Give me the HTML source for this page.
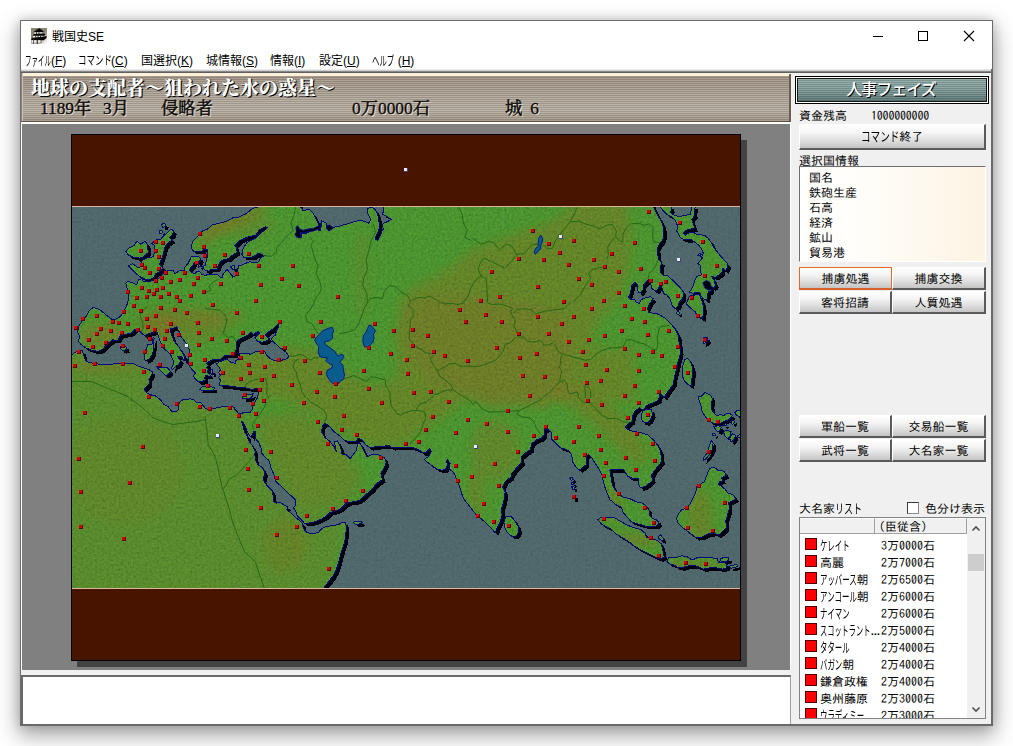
<!DOCTYPE html>
<html lang="ja">
<head>
<meta charset="utf-8">
<title>戦国史SE</title>
<style>
*{box-sizing:border-box;margin:0;padding:0}
html,body{width:1013px;height:746px;overflow:hidden;background:#fff}
body{position:relative;font-family:"Liberation Sans","IPAGothic","Noto Sans CJK JP",sans-serif;font-size:12px;color:#000}
.abs{position:absolute}
#win{position:absolute;left:20px;top:20px;width:973px;height:706px;background:#fff;border:1px solid #6e6e6e;border-right:2px solid #6a6a6a;border-bottom:2px solid #6a6a6a;box-shadow:0 8px 20px 2px rgba(0,0,0,.34),0 0 10px rgba(0,0,0,.16)}
#titlebar{position:absolute;left:21px;top:21px;width:971px;height:48px;background:#fff}
#title{position:absolute;left:52px;top:29px;font-size:12px;line-height:16px;font-family:"Liberation Sans","Noto Sans CJK JP",sans-serif;font-weight:400;white-space:nowrap}
.menu{position:absolute;top:53px;font-size:12px;line-height:16px;white-space:nowrap;font-family:"Liberation Sans","Noto Sans CJK JP",sans-serif}
.menu u{text-decoration:underline;text-underline-offset:1px}
#header{position:absolute;left:21px;top:72px;width:770px;height:50px;overflow:hidden;
 background:linear-gradient(to bottom,#4a4a4a 0,#4a4a4a 1px,#fff0dc 1px,#fff0dc 3.5px,rgba(0,0,0,0) 3.5px),repeating-linear-gradient(to bottom,#b6ac9f 0,#b6ac9f 1px,#978d81 1px,#978d81 2px);
 border-bottom:1px solid #5e5045}
#header i{position:absolute;left:0;top:4px;width:100%;height:46px;background:linear-gradient(to bottom,rgba(60,30,10,.10) 0,rgba(255,255,255,.08) 55%,rgba(255,255,255,.12) 75%,rgba(40,20,0,.10) 100%)}
#header b{position:absolute;left:0;top:0;width:2px;height:50px;background:linear-gradient(to right,#6a6a6a,#e8dcc8)}
#header s{position:absolute;right:0;top:2px;width:2px;height:48px;background:#6b5d50}
#hline{position:absolute;left:21px;top:122px;width:770px;height:2px;background:#fff}
.h1{position:absolute;left:31px;top:77.7px;font-family:"Liberation Serif","Noto Serif CJK SC",serif;font-weight:900;font-size:19px;line-height:22px;color:#fff;text-shadow:1px 1px 0 #000,1px 0 0 rgba(0,0,0,.5);white-space:nowrap;letter-spacing:0}
.h2{position:absolute;top:98.5px;font-family:"Liberation Serif","Noto Serif CJK SC",serif;font-weight:500;font-size:17.33px;line-height:20px;color:#0c0c0c;-webkit-text-stroke:0.35px #0c0c0c;text-shadow:1px 1px 0 #efe6d6;white-space:nowrap}
#grayarea{position:absolute;left:22px;top:124px;width:768px;height:546px;background:#808080}
#mapshadow{position:absolute;left:77px;top:140px;width:670px;height:527px;background:#434343}
#map{position:absolute;left:71px;top:134px;width:670px;height:527px}
#split{position:absolute;left:21px;top:670px;width:770px;height:5px;background:#f0f0f0}
#msg{position:absolute;left:21px;top:675px;width:770px;height:49px;background:#fff;border-top:2px solid #696969;border-left:2px solid #696969;border-right:1px solid #a0a0a0;border-bottom:0}
#side{position:absolute;left:791px;top:72px;width:200px;height:652px;background:#f0f0f0}

#side .t{position:absolute;white-space:nowrap;font-size:12px;line-height:12px;font-family:"IPAGothic","Liberation Sans","Noto Sans CJK JP",sans-serif}
#phase{position:absolute;left:4px;top:4px;width:194px;height:28px;border:1px solid #000;background:#fff;padding:1px}
#phase i{display:block;width:100%;height:100%;border:1px solid #1a1a1a;background:repeating-linear-gradient(to bottom,rgba(255,255,255,.13) 0,rgba(255,255,255,.13) 1px,rgba(0,0,0,.10) 1px,rgba(0,0,0,.10) 2px),linear-gradient(to bottom,#8aa6a2,#7d9a97 45%,#55716f)}
#phase b{position:absolute;left:-1px;top:3px;width:100%;text-align:center;font-family:"Liberation Sans","Noto Sans CJK JP",sans-serif;font-weight:500;font-size:16px;letter-spacing:-1px;line-height:20px;color:#fff;text-shadow:1px 1px 0 #000}
.btn{position:absolute;height:23px;border-top:1px solid #fff;border-left:1px solid #fff;border-right:2px solid #5a5a5a;border-bottom:2px solid #5a5a5a;background:linear-gradient(to bottom,#ffffff 0,#f4f4f4 35%,#dcdcdc 70%,#c4c4c4 100%);text-align:center;font-size:12px;line-height:21px;font-family:"IPAGothic","Liberation Sans","Noto Sans CJK JP",sans-serif;white-space:nowrap}
.btn.foc{border:1px solid #e0692c;border-bottom:2px solid #d8602a;line-height:20px}
#info{position:absolute;left:8px;top:94px;width:187px;height:96px;border-top:1px solid #6e6e6e;border-left:1px solid #6e6e6e;border-right:1px solid #fff;border-bottom:1px solid #fff;background:linear-gradient(to right,#fff 0,#fffdf8 40%,#fdf3e2 100%)}
#list{position:absolute;left:8px;top:445px;width:187px;height:202px;border:1px solid #828282;background:#fff;overflow:hidden}
#list .hd{position:absolute;top:0;height:16px;background:#f0f0f0;border-right:1px solid #a0a0a0;border-bottom:1px solid #a0a0a0;border-top:1px solid #fff}
#list .sq{position:absolute;left:5px;width:12px;height:12px;background:#f00;border:1px solid #500;margin-top:-1px}
#sb{position:absolute;left:167px;top:0;width:18px;height:200px;background:#f0f0f0}
#sb .th{position:absolute;left:1px;top:36px;width:16px;height:17px;background:#cdcdcd}
.hk{font-family:"Noto Sans CJK JP","IPAGothic",sans-serif;font-weight:400}
.sx{display:inline-block;transform-origin:0 50%;font-family:"Noto Sans CJK JP",sans-serif;font-size:13px;font-weight:400;line-height:12px;vertical-align:baseline}
</style>
</head>
<body>
<div id="win"></div>
<div id="titlebar"></div>
<svg class="abs" style="left:31px;top:28px" width="16" height="16" viewBox="0 0 16 16"><defs><linearGradient id="icg" x1="0" y1="0" x2="1" y2="1"><stop offset="0.55" stop-color="#8a8272"/><stop offset="0.9" stop-color="#f4f2ee"/></linearGradient></defs><rect width="16" height="16" fill="url(#icg)"/><rect x="0" y="12" width="10" height="4" fill="#b8b4a8"/><path d="M8.3 0.2L12.8 3.4L12 4.2L3.4 4.2L3 3.6Z" fill="#000"/><rect x="3.4" y="4.3" width="8" height="1.6" fill="#f0f0f0"/><path d="M5 4.3h.8v1.6H5zM7.6 4.3h.8v1.6h-.8z" fill="#111"/><path d="M3 6L12 5.6L14.6 5.9L13 7.8L1.8 7.8Z" fill="#000"/><rect x="2.2" y="7.9" width="10" height="1.6" fill="#f0f0f0"/><path d="M4.4 7.9h.8v1.6h-.8zM6.6 7.9h.9v1.6h-.9zM9 7.9h.8v1.6H9z" fill="#111"/><path d="M1 10L13 8.6L16 8L15 10.6L12.6 12.2L0 11.8Z" fill="#000"/><path d="M1 12.4h1.2v2H1zM3 12.4h2.6v1.8H3zM7 12.4h2.6v1.8H7z" fill="#f4f4f4"/><path d="M2.3 12h.6v4h-.6zM5.8 12h1v4h-1zM9.8 12h.5v3h-.5z" fill="#222"/></svg>
<svg class="abs" style="left:860px;top:21px" width="130" height="30" viewBox="860 21 130 30"><path d="M873 36.5h10" stroke="#000" stroke-width="1" fill="none"/><rect x="918.5" y="31.5" width="9" height="9" fill="none" stroke="#000" stroke-width="1"/><path d="M964 31l10 10M974 31l-10 10" stroke="#000" stroke-width="1.1" fill="none"/></svg>
<div id="title">戦国史SE</div>
<div class="menu" style="left:25px"><span class="sx" style="transform:scaleX(0.498);margin-right:-26.1px">ファイル</span>(<u>F</u>)</div>
<div class="menu" style="left:78px"><span style="display:inline-block;transform:scaleX(.71);transform-origin:0 50%;margin-right:-15px">コマンド</span>(<u>C</u>)</div>
<div class="menu" style="left:141px">国選択(<u>K</u>)</div>
<div class="menu" style="left:206px">城情報(<u>S</u>)</div>
<div class="menu" style="left:270px">情報(<u>I</u>)</div>
<div class="menu" style="left:319px">設定(<u>U</u>)</div>
<div class="menu" style="left:372px"><span class="sx" style="transform:scaleX(0.572);margin-right:-16.7px">ヘルプ</span> (<u>H</u>)</div>
<div class="abs" style="z-index:5;left:21px;top:69px;width:970px;height:4px;background:linear-gradient(to bottom,#f4f4f4 0,#d8d8d8 35%,#8a8a8a 60%,#4c4c4c 100%)"></div>
<div id="header"><i></i><b></b><s></s></div><div id="hline"></div>
<div class="h1">地球の支配者～狙われた水の惑星～</div>
<div class="h2" style="left:40px">1189年</div>
<div class="h2" style="left:103px">3月</div>
<div class="h2" style="left:161px">侵略者</div>
<div class="h2" style="left:352px">0万0000石</div>
<div class="h2" style="left:505px">城<span style="margin-left:8px">6</span></div>
<div id="grayarea"></div>
<div id="mapshadow"></div>
<svg id="map" viewBox="71 134 670 527">
<defs>
<clipPath id="seaclip"><rect x="72" y="207" width="668" height="381"/></clipPath>
<filter id="noise" x="0" y="0" width="100%" height="100%"><feTurbulence type="fractalNoise" baseFrequency="0.42" numOctaves="2" seed="3" result="t"/><feColorMatrix in="t" type="matrix" values="0 0 0 0 0  0 0 0 0 0  0 0 0 0 0  1.2 1.2 0 0 -0.95"/></filter>
<filter id="noise2" x="0" y="0" width="100%" height="100%"><feTurbulence type="fractalNoise" baseFrequency="0.42" numOctaves="2" seed="11" result="t"/><feColorMatrix in="t" type="matrix" values="0 0 0 0 0  0 0 0 0 0  0 0 0 0 0  1.2 1.2 0 0 -0.95"/></filter>
<filter id="blur8"><feGaussianBlur stdDeviation="5"/></filter>
<clipPath id="landclip"><path d="M260 204 L260 206.4 L252.2 208.6 L246.7 213.4 L237.7 217.7 L234.1 217.1 L226.8 221.3 L219.6 223.1 L212.4 224.9 L207.5 229.1 L202.7 230.9 L199.1 234.5 L196.7 237.6 L192.5 241.2 L191.3 247.2 L193.1 251.4 L192.2 249.8 L193.5 251.2 L202.6 251.2 L203.3 249.4 L207.1 249.4 L207.8 253.9 L207.1 257.4 L206.4 260.9 L205.1 263.7 L205.4 265.4 L202.6 266.8 L204.7 270 L208.9 271.4 L210.3 269.3 L217.3 269.3 L218 266.5 L220 262.3 L223.5 259.5 L229.1 258.8 L231.2 256 L234.7 253.9 L237.5 251.9 L236.1 248.4 L236.1 246.3 L234.7 245.6 L238.2 242.1 L240.3 240 L240.1 240.6 L248.5 236.6 L255.8 235.2 L259.4 229.7 L265.4 226.7 L267.6 227.7 L265.4 229.7 L259.4 233.9 L255.8 237.8 L246.7 242.6 L242.5 249.6 L241.9 254.4 L243.7 257.5 L253.4 256.9 L257 254.2 L260 253.2 L263 255.1 L265.4 255.1 L261.2 257.1 L258.8 261.7 L254 263.1 L249.7 261.7 L243.7 264.1 L242.4 264.8 L238.9 265.8 L238.2 268.6 L237.5 271.4 L234.7 276.3 L232.6 277.3 L229.8 272.8 L227 269.3 L225.6 271 L222.8 274.9 L222.8 277.3 L220.7 277.6 L217.3 274.2 L206.8 274.5 L205.8 275.6 L201.9 274.2 L199.5 271.7 L197.7 271 L194.9 273.5 L191.5 272.4 L189.7 270.7 L190.4 267.9 L193.2 265.1 L194.6 262.3 L197 264.4 L198.8 264.1 L199.8 260.9 L200.9 259.2 L199.8 257.4 L197.4 256.4 L191.5 256.4 L190.1 259.2 L188.3 263 L184.5 267.5 L184.1 270.3 L181 270.3 L179.5 270.7 L174.7 273.7 L173.5 270.1 L167.5 270.7 L163.9 272.5 L160.2 277.4 L155.4 279.8 L149.4 281.6 L143.4 281.6 L142.2 278.6 L138.5 279.8 L136.7 284.6 L127.7 281 L125.9 283.4 L126.5 285 L127.7 291 L128.9 297.1 L127.1 304.3 L124.1 310.9 L120.4 316.4 L115.6 319.4 L112 319.4 L107.2 315.8 L99.9 309.7 L93.3 307.3 L89.1 310.9 L86.7 315.8 L82.5 320.6 L78.8 326 L77.6 332 L80 336.9 L78.2 341.1 L81.3 344.7 L86.7 348.3 L93.3 350.7 L98.7 351.3 L103 348.9 L107.2 344.1 L112.6 339.9 L118 340.5 L120.4 335.7 L125.3 334.4 L131.3 333.2 L134.9 329.6 L137.9 329 L140.9 332.6 L144.6 335.7 L148.2 333.8 L153 332.6 L153.7 331.4 L156.9 332.3 L158.2 335.5 L159.6 340.5 L161.9 344.6 L164.2 348.7 L167.4 351.5 L170.1 353.7 L171.9 357.4 L173.7 361.9 L172.8 365.6 L171.5 367.4 L172.4 369.7 L174.7 367 L179.2 364.2 L180.6 360.6 L178.8 358.8 L177.8 356.5 L181.5 356.5 L183.3 360.1 L184.7 361 L184.7 356.5 L181.9 351.9 L179.2 347.4 L176.5 344.6 L173.7 340.1 L171.9 335.5 L170.5 330.9 L170.5 328.7 L173.7 328.2 L176.9 326.8 L177.4 329.1 L179.2 331.9 L181 336.4 L184.7 341.4 L187.4 344.6 L189.2 349.2 L189.7 353.7 L188.3 358.3 L188.3 362.9 L189.7 366.5 L193.4 371.1 L195.3 372.9 L193.4 376.2 L195.3 378.9 L197.7 381.4 L200.1 382 L202.5 381.4 L205.5 380.2 L204.6 378 L205.8 375.6 L208.5 376.2 L210.6 376.2 L209.1 373.8 L207.6 372.9 L207.3 370.5 L208.8 369.9 L206.7 367.5 L208.2 366 L207.9 363.9 L206.4 363.6 L210 360.9 L213.3 359.3 L217.6 359.6 L221.2 359 L223.6 356.6 L225.4 355.4 L230.8 355.4 L235.1 355.1 L235.6 353.1 L236.2 348.2 L236.8 341 L241 338.6 L248.2 335 L250.7 332.6 L253.7 334.4 L257.9 331.4 L259.7 333.2 L256.7 335.6 L254.9 337.4 L257.9 341.6 L262.7 342.2 L267.5 340.4 L269.3 338.6 L265.7 335 L267.5 332.6 L272.4 329.5 L276 325.9 L279 324.1 L278.4 327.7 L276.6 330.2 L275.4 335 L271.2 338.6 L273 341.6 L277.2 345.2 L280.2 348.2 L284.4 349.4 L286.8 353.1 L289 356.4 L285.6 359.7 L279.6 360.3 L273.6 360.3 L269.9 358.5 L266.9 355.5 L265.1 351.9 L261.5 351.3 L255.5 351.9 L250.7 354.3 L245.8 353.1 L239.8 353.1 L239.2 357.9 L238.1 359.6 L235.7 360.3 L235.1 363.3 L232 362.7 L229.6 361.5 L227.8 359.9 L226.6 359 L224.2 359.6 L221.2 361.2 L218.8 362.1 L216.4 364.2 L218.8 366.9 L220.6 369.9 L218.5 372.6 L220.6 375.3 L218.5 377.7 L220.6 380.2 L219.4 383.2 L220 385.6 L222.4 385.6 L228.4 385.6 L230.8 386.8 L234.4 386.5 L237.5 387.7 L245 387.7 L251.5 389.3 L257.5 388.7 L258.7 392.3 L257.5 397.7 L255.1 402 L252.7 406.2 L252.1 409.8 L249.7 412.8 L243.1 412.8 L240.1 414 L238.2 413.4 L235.8 411 L234 407.4 L229.8 406.2 L225 406.2 L218.9 407.4 L212.9 408.6 L208.1 409.2 L205.7 408.6 L202.7 405 L201.5 403.2 L196 402 L193.6 399.5 L190 398.9 L187.5 399.2 L182.7 399.8 L180.3 401.6 L177.9 405.2 L179.1 408.8 L176.7 411.3 L171.3 411.3 L168.2 406.4 L164 404.6 L160.4 399.8 L156.2 396.2 L151.4 395 L147.1 393.2 L144.1 389.5 L146.5 386.5 L149.5 383.5 L148.9 379.3 L151.4 375.7 L152.6 372.1 L150.2 370.3 L145.3 368.4 L139.3 366.6 L133.3 363.6 L127.2 363 L120 363.6 L113.2 364 L101.2 364.6 L93.9 363.4 L86.7 361.6 L84.3 357.4 L82.5 350.7 L78.2 350.7 L72.2 354.3 L68 355 L68 592 L323.5 592 L323.8 588.3 L325 586.2 L327.4 583.2 L332.2 577.2 L335.8 571.2 L338.2 563.9 L340.1 556.7 L342.5 548.2 L344.9 541 L346.1 531.4 L346.1 525.3 L344.9 522.3 L342.5 522.3 L338.2 524.7 L331 525.9 L325 527.1 L321.4 528.9 L318.9 532 L315.9 533.2 L311.7 533.5 L306.9 532.6 L304.5 530.2 L302.7 525.9 L302.7 524.1 L299.9 520.8 L295.1 517.2 L290.3 512.4 L286.7 509.9 L287.9 506.9 L284.3 505.1 L279.4 502.1 L276.4 503.3 L274 502.1 L273.4 496.7 L272.2 490.7 L266.2 484.6 L263.2 479.8 L265 472.6 L262.6 467.7 L257.7 464.7 L255.9 460.5 L254.7 454.5 L255.3 450.9 L251.7 444.8 L248.1 440 L247.9 436.9 L244.9 432.7 L243.1 426.7 L241.3 421.3 L242.5 421.3 L244.3 424.3 L246.7 430.3 L249.1 435.1 L251.5 437.5 L252.1 435.1 L253.9 430.9 L255.7 431.5 L255.1 435.1 L255.7 438.7 L258.7 442.4 L261.2 448.4 L261.8 453.2 L265.4 457.4 L268.4 460 L269.2 461.7 L271 467.7 L274.6 476.2 L275.2 481 L280.7 485.8 L286.7 491.9 L291.5 496.1 L295.1 499.7 L295.7 505.7 L293.3 507.5 L295.7 511.2 L297.5 516 L302.4 520.8 L304.2 523.2 L308.4 523.2 L314.4 522 L321.7 519 L326.5 516 L330.1 512.4 L334.9 511.2 L341 508.7 L345.8 503.9 L350 502.1 L355.1 501.8 L359.9 500 L371.2 490 L377.2 483.2 L382.6 479.6 L380.8 473.6 L384.4 467.5 L386.2 462.7 L384.4 457.6 L379 454.9 L372.4 454.5 L366.9 456.7 L365.7 454.3 L362.7 448.2 L359.7 442.8 L357.6 444.6 L356.1 450.7 L353.1 454.9 L350.1 458.5 L346.4 454.9 L341 453.7 L341.6 450.7 L340.4 446.4 L337.4 440.8 L334.4 441.6 L336.2 451.3 L333.2 445.8 L330.2 441.6 L324.7 437.4 L321.7 432 L322.3 425.9 L325.3 423.5 L328.9 425.9 L333.8 431.4 L338.6 435 L344.6 440.4 L347 441 L356.1 441.6 L357.9 438.6 L361.5 439.2 L365.7 444.6 L369.9 447.6 L378.4 446.4 L389.2 445.8 L391.7 447.6 L402.5 447 L413.4 447.6 L420 450.7 L422.3 452.8 L425.9 452.8 L428.3 450.4 L429.5 448.6 L431.4 451.6 L428.9 456.4 L424.1 459.4 L427.7 462.5 L432.6 466.1 L437.4 469.1 L442.2 470.3 L445.8 469.1 L447.6 464.9 L446.4 460.7 L447.6 459.4 L450.1 463.7 L448.8 468.5 L453.1 472.1 L455.5 475.7 L456.7 481.2 L459.1 484.8 L460.9 490.8 L462.7 496.8 L464.5 500 L467.7 503.8 L473.2 511 L477.4 516.4 L482.2 519.4 L488.2 524.9 L493.1 530.3 L495.2 532.7 L497.3 527.9 L500.3 521.9 L502.1 514.6 L501.5 508.6 L503.3 503.8 L504.5 497.7 L505.1 491.7 L502.7 486.9 L505.1 481.5 L511.2 477.2 L511.8 473.6 L514.8 470 L522.1 461.9 L520.9 457 L525.7 452.8 L530.5 449.8 L531.7 443.8 L535.9 440.2 L541.4 438.3 L544.4 435.3 L544.4 429.9 L547.4 429.3 L551 431.7 L551.6 438.9 L555.8 443.2 L560.7 448 L565.5 449.2 L570.3 452.2 L572.1 457.6 L572.7 461.9 L575.7 466.7 L579.3 470.3 L583.6 466.7 L586 464.9 L586 457 L588.4 454.6 L592 458.2 L596.2 464.9 L599.8 470.3 L602.3 475.7 L603.5 482.4 L605.3 488.4 L607.7 494.4 L610.1 500 L611.7 500.5 L615.9 504.7 L621.4 507.1 L623.2 512.6 L627.4 517.4 L631 521.6 L638.2 524 L646.7 526.4 L655.1 526.4 L659.3 524 L657.5 520.4 L652.7 518.6 L649.1 515 L649.1 510.2 L645.5 505.3 L641.9 502.9 L635.8 501.7 L629.8 498.7 L622.6 496.9 L617.7 492.7 L614.1 488.4 L612.3 484.8 L611.7 480 L611.1 477.2 L609.9 469.9 L623.8 469.7 L627.4 476 L632.2 478.4 L638.2 478.4 L638.8 484.4 L640.7 488 L645.5 486.2 L650.3 482.6 L652.7 480.2 L651.5 475.4 L653.9 471.2 L658.1 466.3 L661.8 461.5 L661.2 456.7 L660.6 450.7 L658.1 445.8 L653.9 440.4 L647.9 435 L643.1 433.2 L637 432 L631 430.8 L627.4 428.9 L625.6 427.1 L628.6 423.5 L632.2 421.1 L632.8 415.7 L635.2 410.9 L639.4 407.8 L643.1 410.3 L644.9 408.4 L646.7 405.4 L652.7 403 L658.7 400 L659.7 394.7 L661.3 394.7 L664 397.4 L667.2 392.6 L670.4 388.3 L673.6 384 L674.2 378.6 L675.8 372.2 L676.9 367.9 L677.9 362.5 L679.5 357.2 L680.6 351.8 L680.1 346.4 L678.5 340 L679.1 337.9 L677.3 333.1 L674.9 328.3 L672.5 325.8 L669.5 322.2 L664.7 318 L659.8 315 L655 313.2 L657.3 313.7 L652.3 313.2 L648.7 312.2 L647.2 308.2 L650.3 302.7 L653.3 298.7 L650.3 296.7 L644.2 298.2 L641.2 299.7 L639.2 303.7 L636.2 302.2 L634.7 299.2 L630.7 299.2 L628.6 297.2 L630.2 294.1 L631.2 289.1 L632.2 284.6 L635.2 282.6 L637.7 284.6 L637.2 288.1 L638.2 292.1 L640.2 293.1 L643.7 289.1 L643.2 285.1 L645.7 282.6 L648.2 279.6 L650.8 283.1 L651.3 288.1 L653.8 290.1 L656.8 291.1 L659.3 286.6 L661.8 286.6 L662.3 290.1 L664.3 294.1 L667.3 295.2 L670.4 299.2 L671.9 305.2 L674.9 308.7 L677.9 306.2 L679.4 302.2 L682.9 298.2 L683.4 292.1 L680.4 288.1 L676.4 284.1 L672.4 280.1 L668.3 276.1 L663.3 275.1 L660.8 273 L660.8 265 L662.2 262.9 L659.2 260.5 L658 255.7 L657.4 248.4 L659.8 243.6 L662.8 240 L664 235.2 L663.4 226.7 L661 220.7 L657.4 214.7 L655 209.8 L652.3 204 L383.9 204 L383.9 206.4 L382.7 214.6 L387.5 216.5 L391.1 219.5 L388.1 221.3 L383.9 223.1 L382.1 224.9 L383.3 229.1 L381.5 232.1 L380.3 235.8 L377.9 240.6 L375.5 239.4 L376.1 235.8 L377.9 232.1 L379.7 227.9 L379.1 223.1 L378.5 218.3 L377.3 212.8 L374.8 209.2 L371.2 207.2 L367.6 208.6 L367 212.2 L368.8 215.9 L370.6 219.5 L368.8 223.1 L364.6 221.3 L359.8 220.1 L353.7 221.9 L347.7 223.7 L339.3 226.1 L333.2 227.3 L331.4 229.7 L328.4 230.3 L326.6 227.9 L326.6 225.5 L326 223.1 L321.8 220.7 L321.4 226.1 L320 230.6 L316.4 229.1 L310.9 230.8 L305.5 233.5 L301.3 233.2 L301.3 237 L297.7 237 L295.3 234.5 L296.8 232.1 L296.1 227.9 L297.7 226.5 L299.2 229.7 L303.1 231.5 L307.9 230.3 L313.9 229.5 L319.1 227.1 L318.2 223.1 L315.8 218.3 L313.3 213.4 L309.7 209.6 L303.1 210.4 L299.5 206.4 L299.5 204 Z M125.9 251.4 L129.5 247.8 L134.3 245.4 L136.7 241.2 L140.9 244.2 L145.2 241.2 L147.6 244.8 L148.2 252.6 L143.4 256.9 L139.7 258.1 L132.5 256.9 L128.3 255.1 Z M128.6 265.9 L132.5 263.5 L138.5 268 L143.4 265.3 L140.9 261.7 L143.4 259.9 L148.2 257.5 L153 256.9 L154.5 252.6 L154.8 245.4 L151.8 243.6 L155.4 240.2 L160.8 239 L162.7 236.6 L167.5 232.5 L171.1 229.1 L173.8 230.9 L172.5 234.9 L169.3 237.3 L172.5 240 L167.5 243.4 L164.8 247.2 L163.6 253.2 L161.5 259.3 L159.6 264.1 L163.3 268.3 L159.6 271.9 L155.4 273.7 L154.2 277.4 L149.4 280 L143.4 278.6 L136.7 274.3 L132.5 270.1 Z M161.5 224.9 L163.3 223.1 L165.7 224.3 L165.1 226.7 L162.7 227.7 Z M159.6 230.9 L161.5 230.1 L162.7 232.1 L161.2 233.9 L159.6 233 Z M230.2 266.5 L234.7 265.4 L235 267.9 L233.3 270 Z M198.1 265.1 L199.8 264.8 L200.5 266.5 L198.8 267.2 Z M120.4 347.1 L122.9 345.3 L125.9 346.5 L126.5 349.5 L123.5 350.7 L121.1 349.5 Z M147.3 344.6 L151.9 344.6 L152.8 338.2 L154.1 337.8 L153.7 346.4 L152.8 353.7 L149.1 359.2 L145.5 360.6 L144.1 358.3 L144.6 351.9 L146.8 348.3 Z M156.9 366.5 L159.6 367.4 L167.4 367.9 L169.2 369.7 L170.5 372 L166.9 375.6 L164.6 374.7 L161 371.1 L157.8 368.3 Z M199.5 389.5 L202.2 386.5 L205.8 386.2 L214.5 387.4 L213.6 390.1 L201.9 390.4 Z M210 369.9 L212.1 369.6 L213 372.9 L212.1 374.4 L210.6 372.9 Z M242.5 397.1 L244.3 395.3 L250.3 394.7 L253.3 393.5 L252.1 396.5 L249.1 398.7 L243.1 398.7 Z M353.3 522.3 L355.7 521.1 L361.2 521.5 L362.4 522.9 L358.7 524.1 L355.1 524.1 Z M505.7 516.4 L511.2 516.4 L514.8 520.7 L518.4 526.7 L519 531.5 L516 536.3 L511.8 536.3 L507.5 532.7 L504.5 526.7 L503.9 521.9 Z M569.7 478.1 L572.1 477.3 L573.3 479.3 L571.5 480.6 Z M571.3 482.4 L573.3 481.8 L573.9 484.2 L572.1 484.8 Z M571.7 486.6 L573.9 486.2 L574.5 489 L572.7 489.6 Z M572.1 495 L575.1 495 L575.1 498.6 L572.1 498.6 Z M643.1 410.9 L646.7 409 L651.5 409.6 L652.7 414.5 L650.3 419.9 L646.7 422.9 L642.5 421.7 L641.3 418.1 L641.9 413.3 Z M687.6 358.2 L690.3 361.5 L692.4 366.8 L692.9 372.2 L691.9 378.6 L691.3 386.1 L687.6 384 L684.4 380.8 L682.2 375.4 L682.2 369 L683.3 363.1 L684.9 359.8 Z M659.8 206.2 L670.7 206.2 L671.9 209.8 L670.1 212.2 L672.5 214.7 L679.1 216.5 L686.4 215.3 L690.6 214 L691.8 206.2 L695.4 206.2 L694.2 211.6 L694.8 215.3 L691.8 219.5 L693.6 224.9 L694.8 228.5 L690 229.1 L685.2 230.9 L683.4 233.4 L685.2 235.2 L690 232.1 L693.6 232.1 L696.6 234.6 L704.5 235.2 L708.1 238.2 L711.7 243 L714.1 247.8 L717.7 252.7 L721.4 256.9 L725 261.1 L728 264.1 L727.4 267.7 L725.6 270.8 L722.6 268.3 L722 272.6 L718.9 275 L715.3 277.4 L711.7 276.2 L714.1 280.4 L715.3 284.6 L715.9 282.4 L715.3 286.6 L712.9 287.8 L710.5 287.2 L711.1 290.9 L708.1 292.1 L707.5 295.7 L706.9 299.9 L704.5 299.3 L700.8 295.7 L699.6 292.1 L697.2 292.1 L692.4 293.3 L689.4 292.1 L691.2 289.7 L693.6 284.8 L694.8 280 L694.2 281 L697.2 276.2 L701.4 275 L700.2 270.1 L700.2 265.3 L697.8 263.5 L700.8 260.5 L702.7 258.1 L700.2 255.7 L697.8 255.7 L699.6 253.3 L702.7 255.7 L703.3 253.3 L701.4 248.4 L698.4 244.8 L693.6 241.2 L691.2 239.4 L686.4 240 L680.9 238.2 L678.5 234 L676.7 230.9 L677.9 226.7 L675.5 220.7 L672.5 217.1 L667.1 214.7 L663.4 211 Z M689.4 296.3 L687.6 300.5 L686.4 304.1 L689.4 307.1 L692.4 309.6 L695.4 312 L696.6 315 L700.2 317.4 L702.7 318.6 L703.3 313.8 L703.9 309 L702.7 302.9 L700.8 298.1 L699.6 294.5 L693.6 295.1 Z M676.1 312.6 L678.5 311.4 L679.7 313.2 L677.9 315 Z M703.3 337.9 L706.9 337.3 L708.1 340.3 L705.7 342.7 L703.3 343.9 Z M698.6 396.6 L701.6 396 L705.2 392.4 L710.7 395.4 L712.5 399 L711.3 404.5 L711.9 409.9 L714.9 414.1 L716.7 415.9 L720.3 414.7 L723.9 415.3 L727 413.5 L731.2 414.1 L732.4 415.9 L728.8 419.6 L723.9 421.4 L720.3 423.2 L716.1 423.8 L711.9 422.6 L708.3 420.2 L705.2 416.5 L702.2 411.7 L701 405.7 L699.2 401.5 Z M734.8 412.9 L737.2 410.5 L743.2 409.9 L743.2 417.1 L737.2 415.9 Z M713.7 426.8 L719.1 425.6 L721.5 427.4 L719.1 432.2 L716.7 431 Z M723.3 431.6 L727.6 430.4 L731.2 431.6 L730 435.8 L727.6 438.3 L725.1 436.4 Z M729.4 438.3 L732.4 434 L735.4 435.2 L734.2 439.5 L731.2 441.9 Z M730.6 421.4 L733.6 420.2 L734.8 422 L732.4 424.4 Z M723.3 424.4 L725.8 423.8 L726.4 425.2 L723.9 426 Z M712.5 434 L714.9 433.4 L715.7 435.2 L713.1 435.8 Z M737.2 435.2 L743.2 434.6 L743.2 437.7 L737.8 437.3 Z M711.3 440.7 L713.1 443.1 L712.5 449.1 L710.7 452.7 L708.3 455.8 L705.8 458.8 L703.4 460.6 L704 457 L706.4 453.9 L708.3 450.3 L709.5 445.5 Z M706.4 476 L704.6 481.5 L701 483.9 L696.8 486.9 L695.6 492.9 L692.6 499 L690.2 503.8 L685.3 508.6 L681.7 509.8 L678.7 513.4 L676.3 518.3 L678.1 523.1 L682.9 527.9 L687.7 531.5 L692.6 535.1 L696.2 537.6 L702.2 537 L708.3 533.9 L714.3 533.3 L718.5 535.1 L722.7 531.5 L726.4 527.9 L725.8 520.7 L727.6 514.6 L729.4 508.6 L728.8 502.6 L732.4 500.8 L736 499 L733 494.7 L727.6 492.9 L725.1 489.3 L721.5 486.3 L718.5 484.5 L719.7 481.5 L723.3 480.9 L721.5 477.8 L726.4 475.4 L724.5 471.8 L722.7 470.8 L717.9 470.2 L714.3 467.2 L709.5 468.4 L707.7 473.2 Z M597.8 519.8 L600.9 517.4 L614.1 517.4 L618.9 520.4 L626.2 524.6 L633.4 527.6 L640.7 529.4 L644.9 533.1 L646.7 537.3 L652.7 539.1 L657.5 540.3 L661.2 543.9 L663 551.2 L664.2 557.2 L659.9 559 L655.1 557.2 L647.9 553.6 L640.7 549.9 L633.4 545.7 L628.6 541.5 L622.6 537.9 L616.5 534.3 L611.7 529.4 L605.7 526.4 L601.5 524 Z M658.1 536.7 L660.6 534.9 L663.6 539.1 L662.4 540.9 L659.3 539.1 Z M666.7 561.4 L668.5 557.8 L677.4 557.2 L682.1 555.8 L686.9 556.7 L690.4 559 L694.6 559 L698.1 557.2 L705.8 557.5 L710.6 557.8 L717.1 558.4 L718.3 562 L723.6 562 L726.5 563.8 L726.5 567.9 L722.4 569.1 L715.3 567.7 L709.4 567.9 L703.4 569.1 L699.9 567.3 L694 565.5 L686.9 566.1 L682.1 567.7 L677.4 567.3 L673.8 564.9 L669.1 563.8 Z M720 559 L723 557.8 L728.3 557.5 L728.9 560.2 L724.8 561.7 L721.2 561 Z M729.5 566.1 L733.1 565.3 L736.6 564.4 L737.8 566.1 L734.2 567.9 L730.7 568.1 Z"/></clipPath>
</defs>
<rect x="71" y="134" width="670" height="527" fill="#481400"/>
<rect x="72" y="206" width="668" height="383" fill="#d8b898"/>
<rect x="72" y="207" width="668" height="381" fill="#536d71"/>
<g clip-path="url(#seaclip)">
<rect x="72" y="207" width="668" height="382" fill="#1c3030" filter="url(#noise)" opacity="0.10"/>
<rect x="72" y="207" width="668" height="382" fill="#a0c0c0" filter="url(#noise2)" opacity="0.06"/>
<path d="M260 204 L260 206.4 L252.2 208.6 L246.7 213.4 L237.7 217.7 L234.1 217.1 L226.8 221.3 L219.6 223.1 L212.4 224.9 L207.5 229.1 L202.7 230.9 L199.1 234.5 L196.7 237.6 L192.5 241.2 L191.3 247.2 L193.1 251.4 L192.2 249.8 L193.5 251.2 L202.6 251.2 L203.3 249.4 L207.1 249.4 L207.8 253.9 L207.1 257.4 L206.4 260.9 L205.1 263.7 L205.4 265.4 L202.6 266.8 L204.7 270 L208.9 271.4 L210.3 269.3 L217.3 269.3 L218 266.5 L220 262.3 L223.5 259.5 L229.1 258.8 L231.2 256 L234.7 253.9 L237.5 251.9 L236.1 248.4 L236.1 246.3 L234.7 245.6 L238.2 242.1 L240.3 240 L240.1 240.6 L248.5 236.6 L255.8 235.2 L259.4 229.7 L265.4 226.7 L267.6 227.7 L265.4 229.7 L259.4 233.9 L255.8 237.8 L246.7 242.6 L242.5 249.6 L241.9 254.4 L243.7 257.5 L253.4 256.9 L257 254.2 L260 253.2 L263 255.1 L265.4 255.1 L261.2 257.1 L258.8 261.7 L254 263.1 L249.7 261.7 L243.7 264.1 L242.4 264.8 L238.9 265.8 L238.2 268.6 L237.5 271.4 L234.7 276.3 L232.6 277.3 L229.8 272.8 L227 269.3 L225.6 271 L222.8 274.9 L222.8 277.3 L220.7 277.6 L217.3 274.2 L206.8 274.5 L205.8 275.6 L201.9 274.2 L199.5 271.7 L197.7 271 L194.9 273.5 L191.5 272.4 L189.7 270.7 L190.4 267.9 L193.2 265.1 L194.6 262.3 L197 264.4 L198.8 264.1 L199.8 260.9 L200.9 259.2 L199.8 257.4 L197.4 256.4 L191.5 256.4 L190.1 259.2 L188.3 263 L184.5 267.5 L184.1 270.3 L181 270.3 L179.5 270.7 L174.7 273.7 L173.5 270.1 L167.5 270.7 L163.9 272.5 L160.2 277.4 L155.4 279.8 L149.4 281.6 L143.4 281.6 L142.2 278.6 L138.5 279.8 L136.7 284.6 L127.7 281 L125.9 283.4 L126.5 285 L127.7 291 L128.9 297.1 L127.1 304.3 L124.1 310.9 L120.4 316.4 L115.6 319.4 L112 319.4 L107.2 315.8 L99.9 309.7 L93.3 307.3 L89.1 310.9 L86.7 315.8 L82.5 320.6 L78.8 326 L77.6 332 L80 336.9 L78.2 341.1 L81.3 344.7 L86.7 348.3 L93.3 350.7 L98.7 351.3 L103 348.9 L107.2 344.1 L112.6 339.9 L118 340.5 L120.4 335.7 L125.3 334.4 L131.3 333.2 L134.9 329.6 L137.9 329 L140.9 332.6 L144.6 335.7 L148.2 333.8 L153 332.6 L153.7 331.4 L156.9 332.3 L158.2 335.5 L159.6 340.5 L161.9 344.6 L164.2 348.7 L167.4 351.5 L170.1 353.7 L171.9 357.4 L173.7 361.9 L172.8 365.6 L171.5 367.4 L172.4 369.7 L174.7 367 L179.2 364.2 L180.6 360.6 L178.8 358.8 L177.8 356.5 L181.5 356.5 L183.3 360.1 L184.7 361 L184.7 356.5 L181.9 351.9 L179.2 347.4 L176.5 344.6 L173.7 340.1 L171.9 335.5 L170.5 330.9 L170.5 328.7 L173.7 328.2 L176.9 326.8 L177.4 329.1 L179.2 331.9 L181 336.4 L184.7 341.4 L187.4 344.6 L189.2 349.2 L189.7 353.7 L188.3 358.3 L188.3 362.9 L189.7 366.5 L193.4 371.1 L195.3 372.9 L193.4 376.2 L195.3 378.9 L197.7 381.4 L200.1 382 L202.5 381.4 L205.5 380.2 L204.6 378 L205.8 375.6 L208.5 376.2 L210.6 376.2 L209.1 373.8 L207.6 372.9 L207.3 370.5 L208.8 369.9 L206.7 367.5 L208.2 366 L207.9 363.9 L206.4 363.6 L210 360.9 L213.3 359.3 L217.6 359.6 L221.2 359 L223.6 356.6 L225.4 355.4 L230.8 355.4 L235.1 355.1 L235.6 353.1 L236.2 348.2 L236.8 341 L241 338.6 L248.2 335 L250.7 332.6 L253.7 334.4 L257.9 331.4 L259.7 333.2 L256.7 335.6 L254.9 337.4 L257.9 341.6 L262.7 342.2 L267.5 340.4 L269.3 338.6 L265.7 335 L267.5 332.6 L272.4 329.5 L276 325.9 L279 324.1 L278.4 327.7 L276.6 330.2 L275.4 335 L271.2 338.6 L273 341.6 L277.2 345.2 L280.2 348.2 L284.4 349.4 L286.8 353.1 L289 356.4 L285.6 359.7 L279.6 360.3 L273.6 360.3 L269.9 358.5 L266.9 355.5 L265.1 351.9 L261.5 351.3 L255.5 351.9 L250.7 354.3 L245.8 353.1 L239.8 353.1 L239.2 357.9 L238.1 359.6 L235.7 360.3 L235.1 363.3 L232 362.7 L229.6 361.5 L227.8 359.9 L226.6 359 L224.2 359.6 L221.2 361.2 L218.8 362.1 L216.4 364.2 L218.8 366.9 L220.6 369.9 L218.5 372.6 L220.6 375.3 L218.5 377.7 L220.6 380.2 L219.4 383.2 L220 385.6 L222.4 385.6 L228.4 385.6 L230.8 386.8 L234.4 386.5 L237.5 387.7 L245 387.7 L251.5 389.3 L257.5 388.7 L258.7 392.3 L257.5 397.7 L255.1 402 L252.7 406.2 L252.1 409.8 L249.7 412.8 L243.1 412.8 L240.1 414 L238.2 413.4 L235.8 411 L234 407.4 L229.8 406.2 L225 406.2 L218.9 407.4 L212.9 408.6 L208.1 409.2 L205.7 408.6 L202.7 405 L201.5 403.2 L196 402 L193.6 399.5 L190 398.9 L187.5 399.2 L182.7 399.8 L180.3 401.6 L177.9 405.2 L179.1 408.8 L176.7 411.3 L171.3 411.3 L168.2 406.4 L164 404.6 L160.4 399.8 L156.2 396.2 L151.4 395 L147.1 393.2 L144.1 389.5 L146.5 386.5 L149.5 383.5 L148.9 379.3 L151.4 375.7 L152.6 372.1 L150.2 370.3 L145.3 368.4 L139.3 366.6 L133.3 363.6 L127.2 363 L120 363.6 L113.2 364 L101.2 364.6 L93.9 363.4 L86.7 361.6 L84.3 357.4 L82.5 350.7 L78.2 350.7 L72.2 354.3 L68 355 L68 592 L323.5 592 L323.8 588.3 L325 586.2 L327.4 583.2 L332.2 577.2 L335.8 571.2 L338.2 563.9 L340.1 556.7 L342.5 548.2 L344.9 541 L346.1 531.4 L346.1 525.3 L344.9 522.3 L342.5 522.3 L338.2 524.7 L331 525.9 L325 527.1 L321.4 528.9 L318.9 532 L315.9 533.2 L311.7 533.5 L306.9 532.6 L304.5 530.2 L302.7 525.9 L302.7 524.1 L299.9 520.8 L295.1 517.2 L290.3 512.4 L286.7 509.9 L287.9 506.9 L284.3 505.1 L279.4 502.1 L276.4 503.3 L274 502.1 L273.4 496.7 L272.2 490.7 L266.2 484.6 L263.2 479.8 L265 472.6 L262.6 467.7 L257.7 464.7 L255.9 460.5 L254.7 454.5 L255.3 450.9 L251.7 444.8 L248.1 440 L247.9 436.9 L244.9 432.7 L243.1 426.7 L241.3 421.3 L242.5 421.3 L244.3 424.3 L246.7 430.3 L249.1 435.1 L251.5 437.5 L252.1 435.1 L253.9 430.9 L255.7 431.5 L255.1 435.1 L255.7 438.7 L258.7 442.4 L261.2 448.4 L261.8 453.2 L265.4 457.4 L268.4 460 L269.2 461.7 L271 467.7 L274.6 476.2 L275.2 481 L280.7 485.8 L286.7 491.9 L291.5 496.1 L295.1 499.7 L295.7 505.7 L293.3 507.5 L295.7 511.2 L297.5 516 L302.4 520.8 L304.2 523.2 L308.4 523.2 L314.4 522 L321.7 519 L326.5 516 L330.1 512.4 L334.9 511.2 L341 508.7 L345.8 503.9 L350 502.1 L355.1 501.8 L359.9 500 L371.2 490 L377.2 483.2 L382.6 479.6 L380.8 473.6 L384.4 467.5 L386.2 462.7 L384.4 457.6 L379 454.9 L372.4 454.5 L366.9 456.7 L365.7 454.3 L362.7 448.2 L359.7 442.8 L357.6 444.6 L356.1 450.7 L353.1 454.9 L350.1 458.5 L346.4 454.9 L341 453.7 L341.6 450.7 L340.4 446.4 L337.4 440.8 L334.4 441.6 L336.2 451.3 L333.2 445.8 L330.2 441.6 L324.7 437.4 L321.7 432 L322.3 425.9 L325.3 423.5 L328.9 425.9 L333.8 431.4 L338.6 435 L344.6 440.4 L347 441 L356.1 441.6 L357.9 438.6 L361.5 439.2 L365.7 444.6 L369.9 447.6 L378.4 446.4 L389.2 445.8 L391.7 447.6 L402.5 447 L413.4 447.6 L420 450.7 L422.3 452.8 L425.9 452.8 L428.3 450.4 L429.5 448.6 L431.4 451.6 L428.9 456.4 L424.1 459.4 L427.7 462.5 L432.6 466.1 L437.4 469.1 L442.2 470.3 L445.8 469.1 L447.6 464.9 L446.4 460.7 L447.6 459.4 L450.1 463.7 L448.8 468.5 L453.1 472.1 L455.5 475.7 L456.7 481.2 L459.1 484.8 L460.9 490.8 L462.7 496.8 L464.5 500 L467.7 503.8 L473.2 511 L477.4 516.4 L482.2 519.4 L488.2 524.9 L493.1 530.3 L495.2 532.7 L497.3 527.9 L500.3 521.9 L502.1 514.6 L501.5 508.6 L503.3 503.8 L504.5 497.7 L505.1 491.7 L502.7 486.9 L505.1 481.5 L511.2 477.2 L511.8 473.6 L514.8 470 L522.1 461.9 L520.9 457 L525.7 452.8 L530.5 449.8 L531.7 443.8 L535.9 440.2 L541.4 438.3 L544.4 435.3 L544.4 429.9 L547.4 429.3 L551 431.7 L551.6 438.9 L555.8 443.2 L560.7 448 L565.5 449.2 L570.3 452.2 L572.1 457.6 L572.7 461.9 L575.7 466.7 L579.3 470.3 L583.6 466.7 L586 464.9 L586 457 L588.4 454.6 L592 458.2 L596.2 464.9 L599.8 470.3 L602.3 475.7 L603.5 482.4 L605.3 488.4 L607.7 494.4 L610.1 500 L611.7 500.5 L615.9 504.7 L621.4 507.1 L623.2 512.6 L627.4 517.4 L631 521.6 L638.2 524 L646.7 526.4 L655.1 526.4 L659.3 524 L657.5 520.4 L652.7 518.6 L649.1 515 L649.1 510.2 L645.5 505.3 L641.9 502.9 L635.8 501.7 L629.8 498.7 L622.6 496.9 L617.7 492.7 L614.1 488.4 L612.3 484.8 L611.7 480 L611.1 477.2 L609.9 469.9 L623.8 469.7 L627.4 476 L632.2 478.4 L638.2 478.4 L638.8 484.4 L640.7 488 L645.5 486.2 L650.3 482.6 L652.7 480.2 L651.5 475.4 L653.9 471.2 L658.1 466.3 L661.8 461.5 L661.2 456.7 L660.6 450.7 L658.1 445.8 L653.9 440.4 L647.9 435 L643.1 433.2 L637 432 L631 430.8 L627.4 428.9 L625.6 427.1 L628.6 423.5 L632.2 421.1 L632.8 415.7 L635.2 410.9 L639.4 407.8 L643.1 410.3 L644.9 408.4 L646.7 405.4 L652.7 403 L658.7 400 L659.7 394.7 L661.3 394.7 L664 397.4 L667.2 392.6 L670.4 388.3 L673.6 384 L674.2 378.6 L675.8 372.2 L676.9 367.9 L677.9 362.5 L679.5 357.2 L680.6 351.8 L680.1 346.4 L678.5 340 L679.1 337.9 L677.3 333.1 L674.9 328.3 L672.5 325.8 L669.5 322.2 L664.7 318 L659.8 315 L655 313.2 L657.3 313.7 L652.3 313.2 L648.7 312.2 L647.2 308.2 L650.3 302.7 L653.3 298.7 L650.3 296.7 L644.2 298.2 L641.2 299.7 L639.2 303.7 L636.2 302.2 L634.7 299.2 L630.7 299.2 L628.6 297.2 L630.2 294.1 L631.2 289.1 L632.2 284.6 L635.2 282.6 L637.7 284.6 L637.2 288.1 L638.2 292.1 L640.2 293.1 L643.7 289.1 L643.2 285.1 L645.7 282.6 L648.2 279.6 L650.8 283.1 L651.3 288.1 L653.8 290.1 L656.8 291.1 L659.3 286.6 L661.8 286.6 L662.3 290.1 L664.3 294.1 L667.3 295.2 L670.4 299.2 L671.9 305.2 L674.9 308.7 L677.9 306.2 L679.4 302.2 L682.9 298.2 L683.4 292.1 L680.4 288.1 L676.4 284.1 L672.4 280.1 L668.3 276.1 L663.3 275.1 L660.8 273 L660.8 265 L662.2 262.9 L659.2 260.5 L658 255.7 L657.4 248.4 L659.8 243.6 L662.8 240 L664 235.2 L663.4 226.7 L661 220.7 L657.4 214.7 L655 209.8 L652.3 204 L383.9 204 L383.9 206.4 L382.7 214.6 L387.5 216.5 L391.1 219.5 L388.1 221.3 L383.9 223.1 L382.1 224.9 L383.3 229.1 L381.5 232.1 L380.3 235.8 L377.9 240.6 L375.5 239.4 L376.1 235.8 L377.9 232.1 L379.7 227.9 L379.1 223.1 L378.5 218.3 L377.3 212.8 L374.8 209.2 L371.2 207.2 L367.6 208.6 L367 212.2 L368.8 215.9 L370.6 219.5 L368.8 223.1 L364.6 221.3 L359.8 220.1 L353.7 221.9 L347.7 223.7 L339.3 226.1 L333.2 227.3 L331.4 229.7 L328.4 230.3 L326.6 227.9 L326.6 225.5 L326 223.1 L321.8 220.7 L321.4 226.1 L320 230.6 L316.4 229.1 L310.9 230.8 L305.5 233.5 L301.3 233.2 L301.3 237 L297.7 237 L295.3 234.5 L296.8 232.1 L296.1 227.9 L297.7 226.5 L299.2 229.7 L303.1 231.5 L307.9 230.3 L313.9 229.5 L319.1 227.1 L318.2 223.1 L315.8 218.3 L313.3 213.4 L309.7 209.6 L303.1 210.4 L299.5 206.4 L299.5 204 Z M125.9 251.4 L129.5 247.8 L134.3 245.4 L136.7 241.2 L140.9 244.2 L145.2 241.2 L147.6 244.8 L148.2 252.6 L143.4 256.9 L139.7 258.1 L132.5 256.9 L128.3 255.1 Z M128.6 265.9 L132.5 263.5 L138.5 268 L143.4 265.3 L140.9 261.7 L143.4 259.9 L148.2 257.5 L153 256.9 L154.5 252.6 L154.8 245.4 L151.8 243.6 L155.4 240.2 L160.8 239 L162.7 236.6 L167.5 232.5 L171.1 229.1 L173.8 230.9 L172.5 234.9 L169.3 237.3 L172.5 240 L167.5 243.4 L164.8 247.2 L163.6 253.2 L161.5 259.3 L159.6 264.1 L163.3 268.3 L159.6 271.9 L155.4 273.7 L154.2 277.4 L149.4 280 L143.4 278.6 L136.7 274.3 L132.5 270.1 Z M161.5 224.9 L163.3 223.1 L165.7 224.3 L165.1 226.7 L162.7 227.7 Z M159.6 230.9 L161.5 230.1 L162.7 232.1 L161.2 233.9 L159.6 233 Z M230.2 266.5 L234.7 265.4 L235 267.9 L233.3 270 Z M198.1 265.1 L199.8 264.8 L200.5 266.5 L198.8 267.2 Z M120.4 347.1 L122.9 345.3 L125.9 346.5 L126.5 349.5 L123.5 350.7 L121.1 349.5 Z M147.3 344.6 L151.9 344.6 L152.8 338.2 L154.1 337.8 L153.7 346.4 L152.8 353.7 L149.1 359.2 L145.5 360.6 L144.1 358.3 L144.6 351.9 L146.8 348.3 Z M156.9 366.5 L159.6 367.4 L167.4 367.9 L169.2 369.7 L170.5 372 L166.9 375.6 L164.6 374.7 L161 371.1 L157.8 368.3 Z M199.5 389.5 L202.2 386.5 L205.8 386.2 L214.5 387.4 L213.6 390.1 L201.9 390.4 Z M210 369.9 L212.1 369.6 L213 372.9 L212.1 374.4 L210.6 372.9 Z M242.5 397.1 L244.3 395.3 L250.3 394.7 L253.3 393.5 L252.1 396.5 L249.1 398.7 L243.1 398.7 Z M353.3 522.3 L355.7 521.1 L361.2 521.5 L362.4 522.9 L358.7 524.1 L355.1 524.1 Z M505.7 516.4 L511.2 516.4 L514.8 520.7 L518.4 526.7 L519 531.5 L516 536.3 L511.8 536.3 L507.5 532.7 L504.5 526.7 L503.9 521.9 Z M569.7 478.1 L572.1 477.3 L573.3 479.3 L571.5 480.6 Z M571.3 482.4 L573.3 481.8 L573.9 484.2 L572.1 484.8 Z M571.7 486.6 L573.9 486.2 L574.5 489 L572.7 489.6 Z M572.1 495 L575.1 495 L575.1 498.6 L572.1 498.6 Z M643.1 410.9 L646.7 409 L651.5 409.6 L652.7 414.5 L650.3 419.9 L646.7 422.9 L642.5 421.7 L641.3 418.1 L641.9 413.3 Z M687.6 358.2 L690.3 361.5 L692.4 366.8 L692.9 372.2 L691.9 378.6 L691.3 386.1 L687.6 384 L684.4 380.8 L682.2 375.4 L682.2 369 L683.3 363.1 L684.9 359.8 Z M659.8 206.2 L670.7 206.2 L671.9 209.8 L670.1 212.2 L672.5 214.7 L679.1 216.5 L686.4 215.3 L690.6 214 L691.8 206.2 L695.4 206.2 L694.2 211.6 L694.8 215.3 L691.8 219.5 L693.6 224.9 L694.8 228.5 L690 229.1 L685.2 230.9 L683.4 233.4 L685.2 235.2 L690 232.1 L693.6 232.1 L696.6 234.6 L704.5 235.2 L708.1 238.2 L711.7 243 L714.1 247.8 L717.7 252.7 L721.4 256.9 L725 261.1 L728 264.1 L727.4 267.7 L725.6 270.8 L722.6 268.3 L722 272.6 L718.9 275 L715.3 277.4 L711.7 276.2 L714.1 280.4 L715.3 284.6 L715.9 282.4 L715.3 286.6 L712.9 287.8 L710.5 287.2 L711.1 290.9 L708.1 292.1 L707.5 295.7 L706.9 299.9 L704.5 299.3 L700.8 295.7 L699.6 292.1 L697.2 292.1 L692.4 293.3 L689.4 292.1 L691.2 289.7 L693.6 284.8 L694.8 280 L694.2 281 L697.2 276.2 L701.4 275 L700.2 270.1 L700.2 265.3 L697.8 263.5 L700.8 260.5 L702.7 258.1 L700.2 255.7 L697.8 255.7 L699.6 253.3 L702.7 255.7 L703.3 253.3 L701.4 248.4 L698.4 244.8 L693.6 241.2 L691.2 239.4 L686.4 240 L680.9 238.2 L678.5 234 L676.7 230.9 L677.9 226.7 L675.5 220.7 L672.5 217.1 L667.1 214.7 L663.4 211 Z M689.4 296.3 L687.6 300.5 L686.4 304.1 L689.4 307.1 L692.4 309.6 L695.4 312 L696.6 315 L700.2 317.4 L702.7 318.6 L703.3 313.8 L703.9 309 L702.7 302.9 L700.8 298.1 L699.6 294.5 L693.6 295.1 Z M676.1 312.6 L678.5 311.4 L679.7 313.2 L677.9 315 Z M703.3 337.9 L706.9 337.3 L708.1 340.3 L705.7 342.7 L703.3 343.9 Z M698.6 396.6 L701.6 396 L705.2 392.4 L710.7 395.4 L712.5 399 L711.3 404.5 L711.9 409.9 L714.9 414.1 L716.7 415.9 L720.3 414.7 L723.9 415.3 L727 413.5 L731.2 414.1 L732.4 415.9 L728.8 419.6 L723.9 421.4 L720.3 423.2 L716.1 423.8 L711.9 422.6 L708.3 420.2 L705.2 416.5 L702.2 411.7 L701 405.7 L699.2 401.5 Z M734.8 412.9 L737.2 410.5 L743.2 409.9 L743.2 417.1 L737.2 415.9 Z M713.7 426.8 L719.1 425.6 L721.5 427.4 L719.1 432.2 L716.7 431 Z M723.3 431.6 L727.6 430.4 L731.2 431.6 L730 435.8 L727.6 438.3 L725.1 436.4 Z M729.4 438.3 L732.4 434 L735.4 435.2 L734.2 439.5 L731.2 441.9 Z M730.6 421.4 L733.6 420.2 L734.8 422 L732.4 424.4 Z M723.3 424.4 L725.8 423.8 L726.4 425.2 L723.9 426 Z M712.5 434 L714.9 433.4 L715.7 435.2 L713.1 435.8 Z M737.2 435.2 L743.2 434.6 L743.2 437.7 L737.8 437.3 Z M711.3 440.7 L713.1 443.1 L712.5 449.1 L710.7 452.7 L708.3 455.8 L705.8 458.8 L703.4 460.6 L704 457 L706.4 453.9 L708.3 450.3 L709.5 445.5 Z M706.4 476 L704.6 481.5 L701 483.9 L696.8 486.9 L695.6 492.9 L692.6 499 L690.2 503.8 L685.3 508.6 L681.7 509.8 L678.7 513.4 L676.3 518.3 L678.1 523.1 L682.9 527.9 L687.7 531.5 L692.6 535.1 L696.2 537.6 L702.2 537 L708.3 533.9 L714.3 533.3 L718.5 535.1 L722.7 531.5 L726.4 527.9 L725.8 520.7 L727.6 514.6 L729.4 508.6 L728.8 502.6 L732.4 500.8 L736 499 L733 494.7 L727.6 492.9 L725.1 489.3 L721.5 486.3 L718.5 484.5 L719.7 481.5 L723.3 480.9 L721.5 477.8 L726.4 475.4 L724.5 471.8 L722.7 470.8 L717.9 470.2 L714.3 467.2 L709.5 468.4 L707.7 473.2 Z M597.8 519.8 L600.9 517.4 L614.1 517.4 L618.9 520.4 L626.2 524.6 L633.4 527.6 L640.7 529.4 L644.9 533.1 L646.7 537.3 L652.7 539.1 L657.5 540.3 L661.2 543.9 L663 551.2 L664.2 557.2 L659.9 559 L655.1 557.2 L647.9 553.6 L640.7 549.9 L633.4 545.7 L628.6 541.5 L622.6 537.9 L616.5 534.3 L611.7 529.4 L605.7 526.4 L601.5 524 Z M658.1 536.7 L660.6 534.9 L663.6 539.1 L662.4 540.9 L659.3 539.1 Z M666.7 561.4 L668.5 557.8 L677.4 557.2 L682.1 555.8 L686.9 556.7 L690.4 559 L694.6 559 L698.1 557.2 L705.8 557.5 L710.6 557.8 L717.1 558.4 L718.3 562 L723.6 562 L726.5 563.8 L726.5 567.9 L722.4 569.1 L715.3 567.7 L709.4 567.9 L703.4 569.1 L699.9 567.3 L694 565.5 L686.9 566.1 L682.1 567.7 L677.4 567.3 L673.8 564.9 L669.1 563.8 Z M720 559 L723 557.8 L728.3 557.5 L728.9 560.2 L724.8 561.7 L721.2 561 Z M729.5 566.1 L733.1 565.3 L736.6 564.4 L737.8 566.1 L734.2 567.9 L730.7 568.1 Z" transform="translate(3 3)" fill="#00000c" shape-rendering="crispEdges"/>
<path d="M260 204 L260 206.4 L252.2 208.6 L246.7 213.4 L237.7 217.7 L234.1 217.1 L226.8 221.3 L219.6 223.1 L212.4 224.9 L207.5 229.1 L202.7 230.9 L199.1 234.5 L196.7 237.6 L192.5 241.2 L191.3 247.2 L193.1 251.4 L192.2 249.8 L193.5 251.2 L202.6 251.2 L203.3 249.4 L207.1 249.4 L207.8 253.9 L207.1 257.4 L206.4 260.9 L205.1 263.7 L205.4 265.4 L202.6 266.8 L204.7 270 L208.9 271.4 L210.3 269.3 L217.3 269.3 L218 266.5 L220 262.3 L223.5 259.5 L229.1 258.8 L231.2 256 L234.7 253.9 L237.5 251.9 L236.1 248.4 L236.1 246.3 L234.7 245.6 L238.2 242.1 L240.3 240 L240.1 240.6 L248.5 236.6 L255.8 235.2 L259.4 229.7 L265.4 226.7 L267.6 227.7 L265.4 229.7 L259.4 233.9 L255.8 237.8 L246.7 242.6 L242.5 249.6 L241.9 254.4 L243.7 257.5 L253.4 256.9 L257 254.2 L260 253.2 L263 255.1 L265.4 255.1 L261.2 257.1 L258.8 261.7 L254 263.1 L249.7 261.7 L243.7 264.1 L242.4 264.8 L238.9 265.8 L238.2 268.6 L237.5 271.4 L234.7 276.3 L232.6 277.3 L229.8 272.8 L227 269.3 L225.6 271 L222.8 274.9 L222.8 277.3 L220.7 277.6 L217.3 274.2 L206.8 274.5 L205.8 275.6 L201.9 274.2 L199.5 271.7 L197.7 271 L194.9 273.5 L191.5 272.4 L189.7 270.7 L190.4 267.9 L193.2 265.1 L194.6 262.3 L197 264.4 L198.8 264.1 L199.8 260.9 L200.9 259.2 L199.8 257.4 L197.4 256.4 L191.5 256.4 L190.1 259.2 L188.3 263 L184.5 267.5 L184.1 270.3 L181 270.3 L179.5 270.7 L174.7 273.7 L173.5 270.1 L167.5 270.7 L163.9 272.5 L160.2 277.4 L155.4 279.8 L149.4 281.6 L143.4 281.6 L142.2 278.6 L138.5 279.8 L136.7 284.6 L127.7 281 L125.9 283.4 L126.5 285 L127.7 291 L128.9 297.1 L127.1 304.3 L124.1 310.9 L120.4 316.4 L115.6 319.4 L112 319.4 L107.2 315.8 L99.9 309.7 L93.3 307.3 L89.1 310.9 L86.7 315.8 L82.5 320.6 L78.8 326 L77.6 332 L80 336.9 L78.2 341.1 L81.3 344.7 L86.7 348.3 L93.3 350.7 L98.7 351.3 L103 348.9 L107.2 344.1 L112.6 339.9 L118 340.5 L120.4 335.7 L125.3 334.4 L131.3 333.2 L134.9 329.6 L137.9 329 L140.9 332.6 L144.6 335.7 L148.2 333.8 L153 332.6 L153.7 331.4 L156.9 332.3 L158.2 335.5 L159.6 340.5 L161.9 344.6 L164.2 348.7 L167.4 351.5 L170.1 353.7 L171.9 357.4 L173.7 361.9 L172.8 365.6 L171.5 367.4 L172.4 369.7 L174.7 367 L179.2 364.2 L180.6 360.6 L178.8 358.8 L177.8 356.5 L181.5 356.5 L183.3 360.1 L184.7 361 L184.7 356.5 L181.9 351.9 L179.2 347.4 L176.5 344.6 L173.7 340.1 L171.9 335.5 L170.5 330.9 L170.5 328.7 L173.7 328.2 L176.9 326.8 L177.4 329.1 L179.2 331.9 L181 336.4 L184.7 341.4 L187.4 344.6 L189.2 349.2 L189.7 353.7 L188.3 358.3 L188.3 362.9 L189.7 366.5 L193.4 371.1 L195.3 372.9 L193.4 376.2 L195.3 378.9 L197.7 381.4 L200.1 382 L202.5 381.4 L205.5 380.2 L204.6 378 L205.8 375.6 L208.5 376.2 L210.6 376.2 L209.1 373.8 L207.6 372.9 L207.3 370.5 L208.8 369.9 L206.7 367.5 L208.2 366 L207.9 363.9 L206.4 363.6 L210 360.9 L213.3 359.3 L217.6 359.6 L221.2 359 L223.6 356.6 L225.4 355.4 L230.8 355.4 L235.1 355.1 L235.6 353.1 L236.2 348.2 L236.8 341 L241 338.6 L248.2 335 L250.7 332.6 L253.7 334.4 L257.9 331.4 L259.7 333.2 L256.7 335.6 L254.9 337.4 L257.9 341.6 L262.7 342.2 L267.5 340.4 L269.3 338.6 L265.7 335 L267.5 332.6 L272.4 329.5 L276 325.9 L279 324.1 L278.4 327.7 L276.6 330.2 L275.4 335 L271.2 338.6 L273 341.6 L277.2 345.2 L280.2 348.2 L284.4 349.4 L286.8 353.1 L289 356.4 L285.6 359.7 L279.6 360.3 L273.6 360.3 L269.9 358.5 L266.9 355.5 L265.1 351.9 L261.5 351.3 L255.5 351.9 L250.7 354.3 L245.8 353.1 L239.8 353.1 L239.2 357.9 L238.1 359.6 L235.7 360.3 L235.1 363.3 L232 362.7 L229.6 361.5 L227.8 359.9 L226.6 359 L224.2 359.6 L221.2 361.2 L218.8 362.1 L216.4 364.2 L218.8 366.9 L220.6 369.9 L218.5 372.6 L220.6 375.3 L218.5 377.7 L220.6 380.2 L219.4 383.2 L220 385.6 L222.4 385.6 L228.4 385.6 L230.8 386.8 L234.4 386.5 L237.5 387.7 L245 387.7 L251.5 389.3 L257.5 388.7 L258.7 392.3 L257.5 397.7 L255.1 402 L252.7 406.2 L252.1 409.8 L249.7 412.8 L243.1 412.8 L240.1 414 L238.2 413.4 L235.8 411 L234 407.4 L229.8 406.2 L225 406.2 L218.9 407.4 L212.9 408.6 L208.1 409.2 L205.7 408.6 L202.7 405 L201.5 403.2 L196 402 L193.6 399.5 L190 398.9 L187.5 399.2 L182.7 399.8 L180.3 401.6 L177.9 405.2 L179.1 408.8 L176.7 411.3 L171.3 411.3 L168.2 406.4 L164 404.6 L160.4 399.8 L156.2 396.2 L151.4 395 L147.1 393.2 L144.1 389.5 L146.5 386.5 L149.5 383.5 L148.9 379.3 L151.4 375.7 L152.6 372.1 L150.2 370.3 L145.3 368.4 L139.3 366.6 L133.3 363.6 L127.2 363 L120 363.6 L113.2 364 L101.2 364.6 L93.9 363.4 L86.7 361.6 L84.3 357.4 L82.5 350.7 L78.2 350.7 L72.2 354.3 L68 355 L68 592 L323.5 592 L323.8 588.3 L325 586.2 L327.4 583.2 L332.2 577.2 L335.8 571.2 L338.2 563.9 L340.1 556.7 L342.5 548.2 L344.9 541 L346.1 531.4 L346.1 525.3 L344.9 522.3 L342.5 522.3 L338.2 524.7 L331 525.9 L325 527.1 L321.4 528.9 L318.9 532 L315.9 533.2 L311.7 533.5 L306.9 532.6 L304.5 530.2 L302.7 525.9 L302.7 524.1 L299.9 520.8 L295.1 517.2 L290.3 512.4 L286.7 509.9 L287.9 506.9 L284.3 505.1 L279.4 502.1 L276.4 503.3 L274 502.1 L273.4 496.7 L272.2 490.7 L266.2 484.6 L263.2 479.8 L265 472.6 L262.6 467.7 L257.7 464.7 L255.9 460.5 L254.7 454.5 L255.3 450.9 L251.7 444.8 L248.1 440 L247.9 436.9 L244.9 432.7 L243.1 426.7 L241.3 421.3 L242.5 421.3 L244.3 424.3 L246.7 430.3 L249.1 435.1 L251.5 437.5 L252.1 435.1 L253.9 430.9 L255.7 431.5 L255.1 435.1 L255.7 438.7 L258.7 442.4 L261.2 448.4 L261.8 453.2 L265.4 457.4 L268.4 460 L269.2 461.7 L271 467.7 L274.6 476.2 L275.2 481 L280.7 485.8 L286.7 491.9 L291.5 496.1 L295.1 499.7 L295.7 505.7 L293.3 507.5 L295.7 511.2 L297.5 516 L302.4 520.8 L304.2 523.2 L308.4 523.2 L314.4 522 L321.7 519 L326.5 516 L330.1 512.4 L334.9 511.2 L341 508.7 L345.8 503.9 L350 502.1 L355.1 501.8 L359.9 500 L371.2 490 L377.2 483.2 L382.6 479.6 L380.8 473.6 L384.4 467.5 L386.2 462.7 L384.4 457.6 L379 454.9 L372.4 454.5 L366.9 456.7 L365.7 454.3 L362.7 448.2 L359.7 442.8 L357.6 444.6 L356.1 450.7 L353.1 454.9 L350.1 458.5 L346.4 454.9 L341 453.7 L341.6 450.7 L340.4 446.4 L337.4 440.8 L334.4 441.6 L336.2 451.3 L333.2 445.8 L330.2 441.6 L324.7 437.4 L321.7 432 L322.3 425.9 L325.3 423.5 L328.9 425.9 L333.8 431.4 L338.6 435 L344.6 440.4 L347 441 L356.1 441.6 L357.9 438.6 L361.5 439.2 L365.7 444.6 L369.9 447.6 L378.4 446.4 L389.2 445.8 L391.7 447.6 L402.5 447 L413.4 447.6 L420 450.7 L422.3 452.8 L425.9 452.8 L428.3 450.4 L429.5 448.6 L431.4 451.6 L428.9 456.4 L424.1 459.4 L427.7 462.5 L432.6 466.1 L437.4 469.1 L442.2 470.3 L445.8 469.1 L447.6 464.9 L446.4 460.7 L447.6 459.4 L450.1 463.7 L448.8 468.5 L453.1 472.1 L455.5 475.7 L456.7 481.2 L459.1 484.8 L460.9 490.8 L462.7 496.8 L464.5 500 L467.7 503.8 L473.2 511 L477.4 516.4 L482.2 519.4 L488.2 524.9 L493.1 530.3 L495.2 532.7 L497.3 527.9 L500.3 521.9 L502.1 514.6 L501.5 508.6 L503.3 503.8 L504.5 497.7 L505.1 491.7 L502.7 486.9 L505.1 481.5 L511.2 477.2 L511.8 473.6 L514.8 470 L522.1 461.9 L520.9 457 L525.7 452.8 L530.5 449.8 L531.7 443.8 L535.9 440.2 L541.4 438.3 L544.4 435.3 L544.4 429.9 L547.4 429.3 L551 431.7 L551.6 438.9 L555.8 443.2 L560.7 448 L565.5 449.2 L570.3 452.2 L572.1 457.6 L572.7 461.9 L575.7 466.7 L579.3 470.3 L583.6 466.7 L586 464.9 L586 457 L588.4 454.6 L592 458.2 L596.2 464.9 L599.8 470.3 L602.3 475.7 L603.5 482.4 L605.3 488.4 L607.7 494.4 L610.1 500 L611.7 500.5 L615.9 504.7 L621.4 507.1 L623.2 512.6 L627.4 517.4 L631 521.6 L638.2 524 L646.7 526.4 L655.1 526.4 L659.3 524 L657.5 520.4 L652.7 518.6 L649.1 515 L649.1 510.2 L645.5 505.3 L641.9 502.9 L635.8 501.7 L629.8 498.7 L622.6 496.9 L617.7 492.7 L614.1 488.4 L612.3 484.8 L611.7 480 L611.1 477.2 L609.9 469.9 L623.8 469.7 L627.4 476 L632.2 478.4 L638.2 478.4 L638.8 484.4 L640.7 488 L645.5 486.2 L650.3 482.6 L652.7 480.2 L651.5 475.4 L653.9 471.2 L658.1 466.3 L661.8 461.5 L661.2 456.7 L660.6 450.7 L658.1 445.8 L653.9 440.4 L647.9 435 L643.1 433.2 L637 432 L631 430.8 L627.4 428.9 L625.6 427.1 L628.6 423.5 L632.2 421.1 L632.8 415.7 L635.2 410.9 L639.4 407.8 L643.1 410.3 L644.9 408.4 L646.7 405.4 L652.7 403 L658.7 400 L659.7 394.7 L661.3 394.7 L664 397.4 L667.2 392.6 L670.4 388.3 L673.6 384 L674.2 378.6 L675.8 372.2 L676.9 367.9 L677.9 362.5 L679.5 357.2 L680.6 351.8 L680.1 346.4 L678.5 340 L679.1 337.9 L677.3 333.1 L674.9 328.3 L672.5 325.8 L669.5 322.2 L664.7 318 L659.8 315 L655 313.2 L657.3 313.7 L652.3 313.2 L648.7 312.2 L647.2 308.2 L650.3 302.7 L653.3 298.7 L650.3 296.7 L644.2 298.2 L641.2 299.7 L639.2 303.7 L636.2 302.2 L634.7 299.2 L630.7 299.2 L628.6 297.2 L630.2 294.1 L631.2 289.1 L632.2 284.6 L635.2 282.6 L637.7 284.6 L637.2 288.1 L638.2 292.1 L640.2 293.1 L643.7 289.1 L643.2 285.1 L645.7 282.6 L648.2 279.6 L650.8 283.1 L651.3 288.1 L653.8 290.1 L656.8 291.1 L659.3 286.6 L661.8 286.6 L662.3 290.1 L664.3 294.1 L667.3 295.2 L670.4 299.2 L671.9 305.2 L674.9 308.7 L677.9 306.2 L679.4 302.2 L682.9 298.2 L683.4 292.1 L680.4 288.1 L676.4 284.1 L672.4 280.1 L668.3 276.1 L663.3 275.1 L660.8 273 L660.8 265 L662.2 262.9 L659.2 260.5 L658 255.7 L657.4 248.4 L659.8 243.6 L662.8 240 L664 235.2 L663.4 226.7 L661 220.7 L657.4 214.7 L655 209.8 L652.3 204 L383.9 204 L383.9 206.4 L382.7 214.6 L387.5 216.5 L391.1 219.5 L388.1 221.3 L383.9 223.1 L382.1 224.9 L383.3 229.1 L381.5 232.1 L380.3 235.8 L377.9 240.6 L375.5 239.4 L376.1 235.8 L377.9 232.1 L379.7 227.9 L379.1 223.1 L378.5 218.3 L377.3 212.8 L374.8 209.2 L371.2 207.2 L367.6 208.6 L367 212.2 L368.8 215.9 L370.6 219.5 L368.8 223.1 L364.6 221.3 L359.8 220.1 L353.7 221.9 L347.7 223.7 L339.3 226.1 L333.2 227.3 L331.4 229.7 L328.4 230.3 L326.6 227.9 L326.6 225.5 L326 223.1 L321.8 220.7 L321.4 226.1 L320 230.6 L316.4 229.1 L310.9 230.8 L305.5 233.5 L301.3 233.2 L301.3 237 L297.7 237 L295.3 234.5 L296.8 232.1 L296.1 227.9 L297.7 226.5 L299.2 229.7 L303.1 231.5 L307.9 230.3 L313.9 229.5 L319.1 227.1 L318.2 223.1 L315.8 218.3 L313.3 213.4 L309.7 209.6 L303.1 210.4 L299.5 206.4 L299.5 204 Z M125.9 251.4 L129.5 247.8 L134.3 245.4 L136.7 241.2 L140.9 244.2 L145.2 241.2 L147.6 244.8 L148.2 252.6 L143.4 256.9 L139.7 258.1 L132.5 256.9 L128.3 255.1 Z M128.6 265.9 L132.5 263.5 L138.5 268 L143.4 265.3 L140.9 261.7 L143.4 259.9 L148.2 257.5 L153 256.9 L154.5 252.6 L154.8 245.4 L151.8 243.6 L155.4 240.2 L160.8 239 L162.7 236.6 L167.5 232.5 L171.1 229.1 L173.8 230.9 L172.5 234.9 L169.3 237.3 L172.5 240 L167.5 243.4 L164.8 247.2 L163.6 253.2 L161.5 259.3 L159.6 264.1 L163.3 268.3 L159.6 271.9 L155.4 273.7 L154.2 277.4 L149.4 280 L143.4 278.6 L136.7 274.3 L132.5 270.1 Z M161.5 224.9 L163.3 223.1 L165.7 224.3 L165.1 226.7 L162.7 227.7 Z M159.6 230.9 L161.5 230.1 L162.7 232.1 L161.2 233.9 L159.6 233 Z M230.2 266.5 L234.7 265.4 L235 267.9 L233.3 270 Z M198.1 265.1 L199.8 264.8 L200.5 266.5 L198.8 267.2 Z M120.4 347.1 L122.9 345.3 L125.9 346.5 L126.5 349.5 L123.5 350.7 L121.1 349.5 Z M147.3 344.6 L151.9 344.6 L152.8 338.2 L154.1 337.8 L153.7 346.4 L152.8 353.7 L149.1 359.2 L145.5 360.6 L144.1 358.3 L144.6 351.9 L146.8 348.3 Z M156.9 366.5 L159.6 367.4 L167.4 367.9 L169.2 369.7 L170.5 372 L166.9 375.6 L164.6 374.7 L161 371.1 L157.8 368.3 Z M199.5 389.5 L202.2 386.5 L205.8 386.2 L214.5 387.4 L213.6 390.1 L201.9 390.4 Z M210 369.9 L212.1 369.6 L213 372.9 L212.1 374.4 L210.6 372.9 Z M242.5 397.1 L244.3 395.3 L250.3 394.7 L253.3 393.5 L252.1 396.5 L249.1 398.7 L243.1 398.7 Z M353.3 522.3 L355.7 521.1 L361.2 521.5 L362.4 522.9 L358.7 524.1 L355.1 524.1 Z M505.7 516.4 L511.2 516.4 L514.8 520.7 L518.4 526.7 L519 531.5 L516 536.3 L511.8 536.3 L507.5 532.7 L504.5 526.7 L503.9 521.9 Z M569.7 478.1 L572.1 477.3 L573.3 479.3 L571.5 480.6 Z M571.3 482.4 L573.3 481.8 L573.9 484.2 L572.1 484.8 Z M571.7 486.6 L573.9 486.2 L574.5 489 L572.7 489.6 Z M572.1 495 L575.1 495 L575.1 498.6 L572.1 498.6 Z M643.1 410.9 L646.7 409 L651.5 409.6 L652.7 414.5 L650.3 419.9 L646.7 422.9 L642.5 421.7 L641.3 418.1 L641.9 413.3 Z M687.6 358.2 L690.3 361.5 L692.4 366.8 L692.9 372.2 L691.9 378.6 L691.3 386.1 L687.6 384 L684.4 380.8 L682.2 375.4 L682.2 369 L683.3 363.1 L684.9 359.8 Z M659.8 206.2 L670.7 206.2 L671.9 209.8 L670.1 212.2 L672.5 214.7 L679.1 216.5 L686.4 215.3 L690.6 214 L691.8 206.2 L695.4 206.2 L694.2 211.6 L694.8 215.3 L691.8 219.5 L693.6 224.9 L694.8 228.5 L690 229.1 L685.2 230.9 L683.4 233.4 L685.2 235.2 L690 232.1 L693.6 232.1 L696.6 234.6 L704.5 235.2 L708.1 238.2 L711.7 243 L714.1 247.8 L717.7 252.7 L721.4 256.9 L725 261.1 L728 264.1 L727.4 267.7 L725.6 270.8 L722.6 268.3 L722 272.6 L718.9 275 L715.3 277.4 L711.7 276.2 L714.1 280.4 L715.3 284.6 L715.9 282.4 L715.3 286.6 L712.9 287.8 L710.5 287.2 L711.1 290.9 L708.1 292.1 L707.5 295.7 L706.9 299.9 L704.5 299.3 L700.8 295.7 L699.6 292.1 L697.2 292.1 L692.4 293.3 L689.4 292.1 L691.2 289.7 L693.6 284.8 L694.8 280 L694.2 281 L697.2 276.2 L701.4 275 L700.2 270.1 L700.2 265.3 L697.8 263.5 L700.8 260.5 L702.7 258.1 L700.2 255.7 L697.8 255.7 L699.6 253.3 L702.7 255.7 L703.3 253.3 L701.4 248.4 L698.4 244.8 L693.6 241.2 L691.2 239.4 L686.4 240 L680.9 238.2 L678.5 234 L676.7 230.9 L677.9 226.7 L675.5 220.7 L672.5 217.1 L667.1 214.7 L663.4 211 Z M689.4 296.3 L687.6 300.5 L686.4 304.1 L689.4 307.1 L692.4 309.6 L695.4 312 L696.6 315 L700.2 317.4 L702.7 318.6 L703.3 313.8 L703.9 309 L702.7 302.9 L700.8 298.1 L699.6 294.5 L693.6 295.1 Z M676.1 312.6 L678.5 311.4 L679.7 313.2 L677.9 315 Z M703.3 337.9 L706.9 337.3 L708.1 340.3 L705.7 342.7 L703.3 343.9 Z M698.6 396.6 L701.6 396 L705.2 392.4 L710.7 395.4 L712.5 399 L711.3 404.5 L711.9 409.9 L714.9 414.1 L716.7 415.9 L720.3 414.7 L723.9 415.3 L727 413.5 L731.2 414.1 L732.4 415.9 L728.8 419.6 L723.9 421.4 L720.3 423.2 L716.1 423.8 L711.9 422.6 L708.3 420.2 L705.2 416.5 L702.2 411.7 L701 405.7 L699.2 401.5 Z M734.8 412.9 L737.2 410.5 L743.2 409.9 L743.2 417.1 L737.2 415.9 Z M713.7 426.8 L719.1 425.6 L721.5 427.4 L719.1 432.2 L716.7 431 Z M723.3 431.6 L727.6 430.4 L731.2 431.6 L730 435.8 L727.6 438.3 L725.1 436.4 Z M729.4 438.3 L732.4 434 L735.4 435.2 L734.2 439.5 L731.2 441.9 Z M730.6 421.4 L733.6 420.2 L734.8 422 L732.4 424.4 Z M723.3 424.4 L725.8 423.8 L726.4 425.2 L723.9 426 Z M712.5 434 L714.9 433.4 L715.7 435.2 L713.1 435.8 Z M737.2 435.2 L743.2 434.6 L743.2 437.7 L737.8 437.3 Z M711.3 440.7 L713.1 443.1 L712.5 449.1 L710.7 452.7 L708.3 455.8 L705.8 458.8 L703.4 460.6 L704 457 L706.4 453.9 L708.3 450.3 L709.5 445.5 Z M706.4 476 L704.6 481.5 L701 483.9 L696.8 486.9 L695.6 492.9 L692.6 499 L690.2 503.8 L685.3 508.6 L681.7 509.8 L678.7 513.4 L676.3 518.3 L678.1 523.1 L682.9 527.9 L687.7 531.5 L692.6 535.1 L696.2 537.6 L702.2 537 L708.3 533.9 L714.3 533.3 L718.5 535.1 L722.7 531.5 L726.4 527.9 L725.8 520.7 L727.6 514.6 L729.4 508.6 L728.8 502.6 L732.4 500.8 L736 499 L733 494.7 L727.6 492.9 L725.1 489.3 L721.5 486.3 L718.5 484.5 L719.7 481.5 L723.3 480.9 L721.5 477.8 L726.4 475.4 L724.5 471.8 L722.7 470.8 L717.9 470.2 L714.3 467.2 L709.5 468.4 L707.7 473.2 Z M597.8 519.8 L600.9 517.4 L614.1 517.4 L618.9 520.4 L626.2 524.6 L633.4 527.6 L640.7 529.4 L644.9 533.1 L646.7 537.3 L652.7 539.1 L657.5 540.3 L661.2 543.9 L663 551.2 L664.2 557.2 L659.9 559 L655.1 557.2 L647.9 553.6 L640.7 549.9 L633.4 545.7 L628.6 541.5 L622.6 537.9 L616.5 534.3 L611.7 529.4 L605.7 526.4 L601.5 524 Z M658.1 536.7 L660.6 534.9 L663.6 539.1 L662.4 540.9 L659.3 539.1 Z M666.7 561.4 L668.5 557.8 L677.4 557.2 L682.1 555.8 L686.9 556.7 L690.4 559 L694.6 559 L698.1 557.2 L705.8 557.5 L710.6 557.8 L717.1 558.4 L718.3 562 L723.6 562 L726.5 563.8 L726.5 567.9 L722.4 569.1 L715.3 567.7 L709.4 567.9 L703.4 569.1 L699.9 567.3 L694 565.5 L686.9 566.1 L682.1 567.7 L677.4 567.3 L673.8 564.9 L669.1 563.8 Z M720 559 L723 557.8 L728.3 557.5 L728.9 560.2 L724.8 561.7 L721.2 561 Z M729.5 566.1 L733.1 565.3 L736.6 564.4 L737.8 566.1 L734.2 567.9 L730.7 568.1 Z" fill="#529f34"/>
<g clip-path="url(#landclip)">
<g filter="url(#blur8)" fill="#9d6f22">
<path d="M215 362 L245 354 L285 346 L320 352 L345 372 L372 386 L397 378 L396 340 L399 302 L412 288 L440 274 L473 250 L512 235 L545 224 L565 214 L577 200 L627 200 L632 240 L628 275 L618 300 L600 318 L590 345 L610 350 L633 348 L636 398 L620 402 L600 398 L585 385 L575 395 L555 402 L540 410 L520 402 L500 408 L480 404 L470 398 L455 408 L440 420 L420 432 L400 445 L380 447 L360 440 L345 432 L330 428 L318 415 L300 408 L285 400 L262 398 L240 392 L222 385 L212 372 Z" opacity="0.33"/>
<path d="M68 350 L120 362 L150 375 L190 400 L245 405 L250 440 L275 480 L300 520 L340 505 L345 530 L325 592 L68 592 Z" opacity="0.20"/>
<path d="M408 300 L440 292 L480 296 L520 300 L560 310 L575 340 L570 375 L550 400 L520 408 L490 405 L460 395 L430 385 L410 360 L400 330 Z" opacity="0.22"/>
<path d="M262 415 L300 412 L330 430 L350 455 L362 480 L350 498 L320 510 L300 515 L285 490 L270 460 L258 435 Z" opacity="0.30"/>
<path d="M196 236 L215 222 L240 212 L262 204 L270 210 L245 222 L222 232 L205 246 Z" opacity="0.45"/>
<path d="M555 385 L590 385 L610 405 L635 430 L650 455 L640 465 L620 450 L600 430 L575 410 L555 400 Z" opacity="0.35"/>
<ellipse cx="362" cy="275" rx="8" ry="45" opacity="0.16"/>
<ellipse cx="238" cy="226" rx="38" ry="10" opacity="0.22"/>
<ellipse cx="185" cy="325" rx="42" ry="18" opacity="0.28"/>
<ellipse cx="495" cy="450" rx="24" ry="30" opacity="0.28"/>
<ellipse cx="110" cy="365" rx="38" ry="8" opacity="0.3"/>
<ellipse cx="125" cy="470" rx="60" ry="55" opacity="0.1"/>
<ellipse cx="285" cy="545" rx="22" ry="28" opacity="0.2"/>
<ellipse cx="102" cy="336" rx="24" ry="13" opacity="0.4"/>
<ellipse cx="160" cy="322" rx="22" ry="11" opacity="0.4"/>
<ellipse cx="215" cy="318" rx="30" ry="9" opacity="0.3"/>
<ellipse cx="476" cy="492" rx="9" ry="24" opacity="0.3"/>
<ellipse cx="700" cy="515" rx="12" ry="26" opacity="0.35"/>
<ellipse cx="635" cy="540" rx="26" ry="6" opacity="0.4"/>
<ellipse cx="612" cy="505" rx="10" ry="18" opacity="0.3"/>
<ellipse cx="690" cy="565" rx="35" ry="4" opacity="0.4"/>
</g>
<rect x="72" y="207" width="668" height="382" fill="#0c3000" filter="url(#noise)" opacity="0.15"/>
<rect x="72" y="207" width="668" height="382" fill="#b0e070" filter="url(#noise2)" opacity="0.14"/>
</g>
<path d="M260 204 L260 206.4 L252.2 208.6 L246.7 213.4 L237.7 217.7 L234.1 217.1 L226.8 221.3 L219.6 223.1 L212.4 224.9 L207.5 229.1 L202.7 230.9 L199.1 234.5 L196.7 237.6 L192.5 241.2 L191.3 247.2 L193.1 251.4 L192.2 249.8 L193.5 251.2 L202.6 251.2 L203.3 249.4 L207.1 249.4 L207.8 253.9 L207.1 257.4 L206.4 260.9 L205.1 263.7 L205.4 265.4 L202.6 266.8 L204.7 270 L208.9 271.4 L210.3 269.3 L217.3 269.3 L218 266.5 L220 262.3 L223.5 259.5 L229.1 258.8 L231.2 256 L234.7 253.9 L237.5 251.9 L236.1 248.4 L236.1 246.3 L234.7 245.6 L238.2 242.1 L240.3 240 L240.1 240.6 L248.5 236.6 L255.8 235.2 L259.4 229.7 L265.4 226.7 L267.6 227.7 L265.4 229.7 L259.4 233.9 L255.8 237.8 L246.7 242.6 L242.5 249.6 L241.9 254.4 L243.7 257.5 L253.4 256.9 L257 254.2 L260 253.2 L263 255.1 L265.4 255.1 L261.2 257.1 L258.8 261.7 L254 263.1 L249.7 261.7 L243.7 264.1 L242.4 264.8 L238.9 265.8 L238.2 268.6 L237.5 271.4 L234.7 276.3 L232.6 277.3 L229.8 272.8 L227 269.3 L225.6 271 L222.8 274.9 L222.8 277.3 L220.7 277.6 L217.3 274.2 L206.8 274.5 L205.8 275.6 L201.9 274.2 L199.5 271.7 L197.7 271 L194.9 273.5 L191.5 272.4 L189.7 270.7 L190.4 267.9 L193.2 265.1 L194.6 262.3 L197 264.4 L198.8 264.1 L199.8 260.9 L200.9 259.2 L199.8 257.4 L197.4 256.4 L191.5 256.4 L190.1 259.2 L188.3 263 L184.5 267.5 L184.1 270.3 L181 270.3 L179.5 270.7 L174.7 273.7 L173.5 270.1 L167.5 270.7 L163.9 272.5 L160.2 277.4 L155.4 279.8 L149.4 281.6 L143.4 281.6 L142.2 278.6 L138.5 279.8 L136.7 284.6 L127.7 281 L125.9 283.4 L126.5 285 L127.7 291 L128.9 297.1 L127.1 304.3 L124.1 310.9 L120.4 316.4 L115.6 319.4 L112 319.4 L107.2 315.8 L99.9 309.7 L93.3 307.3 L89.1 310.9 L86.7 315.8 L82.5 320.6 L78.8 326 L77.6 332 L80 336.9 L78.2 341.1 L81.3 344.7 L86.7 348.3 L93.3 350.7 L98.7 351.3 L103 348.9 L107.2 344.1 L112.6 339.9 L118 340.5 L120.4 335.7 L125.3 334.4 L131.3 333.2 L134.9 329.6 L137.9 329 L140.9 332.6 L144.6 335.7 L148.2 333.8 L153 332.6 L153.7 331.4 L156.9 332.3 L158.2 335.5 L159.6 340.5 L161.9 344.6 L164.2 348.7 L167.4 351.5 L170.1 353.7 L171.9 357.4 L173.7 361.9 L172.8 365.6 L171.5 367.4 L172.4 369.7 L174.7 367 L179.2 364.2 L180.6 360.6 L178.8 358.8 L177.8 356.5 L181.5 356.5 L183.3 360.1 L184.7 361 L184.7 356.5 L181.9 351.9 L179.2 347.4 L176.5 344.6 L173.7 340.1 L171.9 335.5 L170.5 330.9 L170.5 328.7 L173.7 328.2 L176.9 326.8 L177.4 329.1 L179.2 331.9 L181 336.4 L184.7 341.4 L187.4 344.6 L189.2 349.2 L189.7 353.7 L188.3 358.3 L188.3 362.9 L189.7 366.5 L193.4 371.1 L195.3 372.9 L193.4 376.2 L195.3 378.9 L197.7 381.4 L200.1 382 L202.5 381.4 L205.5 380.2 L204.6 378 L205.8 375.6 L208.5 376.2 L210.6 376.2 L209.1 373.8 L207.6 372.9 L207.3 370.5 L208.8 369.9 L206.7 367.5 L208.2 366 L207.9 363.9 L206.4 363.6 L210 360.9 L213.3 359.3 L217.6 359.6 L221.2 359 L223.6 356.6 L225.4 355.4 L230.8 355.4 L235.1 355.1 L235.6 353.1 L236.2 348.2 L236.8 341 L241 338.6 L248.2 335 L250.7 332.6 L253.7 334.4 L257.9 331.4 L259.7 333.2 L256.7 335.6 L254.9 337.4 L257.9 341.6 L262.7 342.2 L267.5 340.4 L269.3 338.6 L265.7 335 L267.5 332.6 L272.4 329.5 L276 325.9 L279 324.1 L278.4 327.7 L276.6 330.2 L275.4 335 L271.2 338.6 L273 341.6 L277.2 345.2 L280.2 348.2 L284.4 349.4 L286.8 353.1 L289 356.4 L285.6 359.7 L279.6 360.3 L273.6 360.3 L269.9 358.5 L266.9 355.5 L265.1 351.9 L261.5 351.3 L255.5 351.9 L250.7 354.3 L245.8 353.1 L239.8 353.1 L239.2 357.9 L238.1 359.6 L235.7 360.3 L235.1 363.3 L232 362.7 L229.6 361.5 L227.8 359.9 L226.6 359 L224.2 359.6 L221.2 361.2 L218.8 362.1 L216.4 364.2 L218.8 366.9 L220.6 369.9 L218.5 372.6 L220.6 375.3 L218.5 377.7 L220.6 380.2 L219.4 383.2 L220 385.6 L222.4 385.6 L228.4 385.6 L230.8 386.8 L234.4 386.5 L237.5 387.7 L245 387.7 L251.5 389.3 L257.5 388.7 L258.7 392.3 L257.5 397.7 L255.1 402 L252.7 406.2 L252.1 409.8 L249.7 412.8 L243.1 412.8 L240.1 414 L238.2 413.4 L235.8 411 L234 407.4 L229.8 406.2 L225 406.2 L218.9 407.4 L212.9 408.6 L208.1 409.2 L205.7 408.6 L202.7 405 L201.5 403.2 L196 402 L193.6 399.5 L190 398.9 L187.5 399.2 L182.7 399.8 L180.3 401.6 L177.9 405.2 L179.1 408.8 L176.7 411.3 L171.3 411.3 L168.2 406.4 L164 404.6 L160.4 399.8 L156.2 396.2 L151.4 395 L147.1 393.2 L144.1 389.5 L146.5 386.5 L149.5 383.5 L148.9 379.3 L151.4 375.7 L152.6 372.1 L150.2 370.3 L145.3 368.4 L139.3 366.6 L133.3 363.6 L127.2 363 L120 363.6 L113.2 364 L101.2 364.6 L93.9 363.4 L86.7 361.6 L84.3 357.4 L82.5 350.7 L78.2 350.7 L72.2 354.3 L68 355 L68 592 L323.5 592 L323.8 588.3 L325 586.2 L327.4 583.2 L332.2 577.2 L335.8 571.2 L338.2 563.9 L340.1 556.7 L342.5 548.2 L344.9 541 L346.1 531.4 L346.1 525.3 L344.9 522.3 L342.5 522.3 L338.2 524.7 L331 525.9 L325 527.1 L321.4 528.9 L318.9 532 L315.9 533.2 L311.7 533.5 L306.9 532.6 L304.5 530.2 L302.7 525.9 L302.7 524.1 L299.9 520.8 L295.1 517.2 L290.3 512.4 L286.7 509.9 L287.9 506.9 L284.3 505.1 L279.4 502.1 L276.4 503.3 L274 502.1 L273.4 496.7 L272.2 490.7 L266.2 484.6 L263.2 479.8 L265 472.6 L262.6 467.7 L257.7 464.7 L255.9 460.5 L254.7 454.5 L255.3 450.9 L251.7 444.8 L248.1 440 L247.9 436.9 L244.9 432.7 L243.1 426.7 L241.3 421.3 L242.5 421.3 L244.3 424.3 L246.7 430.3 L249.1 435.1 L251.5 437.5 L252.1 435.1 L253.9 430.9 L255.7 431.5 L255.1 435.1 L255.7 438.7 L258.7 442.4 L261.2 448.4 L261.8 453.2 L265.4 457.4 L268.4 460 L269.2 461.7 L271 467.7 L274.6 476.2 L275.2 481 L280.7 485.8 L286.7 491.9 L291.5 496.1 L295.1 499.7 L295.7 505.7 L293.3 507.5 L295.7 511.2 L297.5 516 L302.4 520.8 L304.2 523.2 L308.4 523.2 L314.4 522 L321.7 519 L326.5 516 L330.1 512.4 L334.9 511.2 L341 508.7 L345.8 503.9 L350 502.1 L355.1 501.8 L359.9 500 L371.2 490 L377.2 483.2 L382.6 479.6 L380.8 473.6 L384.4 467.5 L386.2 462.7 L384.4 457.6 L379 454.9 L372.4 454.5 L366.9 456.7 L365.7 454.3 L362.7 448.2 L359.7 442.8 L357.6 444.6 L356.1 450.7 L353.1 454.9 L350.1 458.5 L346.4 454.9 L341 453.7 L341.6 450.7 L340.4 446.4 L337.4 440.8 L334.4 441.6 L336.2 451.3 L333.2 445.8 L330.2 441.6 L324.7 437.4 L321.7 432 L322.3 425.9 L325.3 423.5 L328.9 425.9 L333.8 431.4 L338.6 435 L344.6 440.4 L347 441 L356.1 441.6 L357.9 438.6 L361.5 439.2 L365.7 444.6 L369.9 447.6 L378.4 446.4 L389.2 445.8 L391.7 447.6 L402.5 447 L413.4 447.6 L420 450.7 L422.3 452.8 L425.9 452.8 L428.3 450.4 L429.5 448.6 L431.4 451.6 L428.9 456.4 L424.1 459.4 L427.7 462.5 L432.6 466.1 L437.4 469.1 L442.2 470.3 L445.8 469.1 L447.6 464.9 L446.4 460.7 L447.6 459.4 L450.1 463.7 L448.8 468.5 L453.1 472.1 L455.5 475.7 L456.7 481.2 L459.1 484.8 L460.9 490.8 L462.7 496.8 L464.5 500 L467.7 503.8 L473.2 511 L477.4 516.4 L482.2 519.4 L488.2 524.9 L493.1 530.3 L495.2 532.7 L497.3 527.9 L500.3 521.9 L502.1 514.6 L501.5 508.6 L503.3 503.8 L504.5 497.7 L505.1 491.7 L502.7 486.9 L505.1 481.5 L511.2 477.2 L511.8 473.6 L514.8 470 L522.1 461.9 L520.9 457 L525.7 452.8 L530.5 449.8 L531.7 443.8 L535.9 440.2 L541.4 438.3 L544.4 435.3 L544.4 429.9 L547.4 429.3 L551 431.7 L551.6 438.9 L555.8 443.2 L560.7 448 L565.5 449.2 L570.3 452.2 L572.1 457.6 L572.7 461.9 L575.7 466.7 L579.3 470.3 L583.6 466.7 L586 464.9 L586 457 L588.4 454.6 L592 458.2 L596.2 464.9 L599.8 470.3 L602.3 475.7 L603.5 482.4 L605.3 488.4 L607.7 494.4 L610.1 500 L611.7 500.5 L615.9 504.7 L621.4 507.1 L623.2 512.6 L627.4 517.4 L631 521.6 L638.2 524 L646.7 526.4 L655.1 526.4 L659.3 524 L657.5 520.4 L652.7 518.6 L649.1 515 L649.1 510.2 L645.5 505.3 L641.9 502.9 L635.8 501.7 L629.8 498.7 L622.6 496.9 L617.7 492.7 L614.1 488.4 L612.3 484.8 L611.7 480 L611.1 477.2 L609.9 469.9 L623.8 469.7 L627.4 476 L632.2 478.4 L638.2 478.4 L638.8 484.4 L640.7 488 L645.5 486.2 L650.3 482.6 L652.7 480.2 L651.5 475.4 L653.9 471.2 L658.1 466.3 L661.8 461.5 L661.2 456.7 L660.6 450.7 L658.1 445.8 L653.9 440.4 L647.9 435 L643.1 433.2 L637 432 L631 430.8 L627.4 428.9 L625.6 427.1 L628.6 423.5 L632.2 421.1 L632.8 415.7 L635.2 410.9 L639.4 407.8 L643.1 410.3 L644.9 408.4 L646.7 405.4 L652.7 403 L658.7 400 L659.7 394.7 L661.3 394.7 L664 397.4 L667.2 392.6 L670.4 388.3 L673.6 384 L674.2 378.6 L675.8 372.2 L676.9 367.9 L677.9 362.5 L679.5 357.2 L680.6 351.8 L680.1 346.4 L678.5 340 L679.1 337.9 L677.3 333.1 L674.9 328.3 L672.5 325.8 L669.5 322.2 L664.7 318 L659.8 315 L655 313.2 L657.3 313.7 L652.3 313.2 L648.7 312.2 L647.2 308.2 L650.3 302.7 L653.3 298.7 L650.3 296.7 L644.2 298.2 L641.2 299.7 L639.2 303.7 L636.2 302.2 L634.7 299.2 L630.7 299.2 L628.6 297.2 L630.2 294.1 L631.2 289.1 L632.2 284.6 L635.2 282.6 L637.7 284.6 L637.2 288.1 L638.2 292.1 L640.2 293.1 L643.7 289.1 L643.2 285.1 L645.7 282.6 L648.2 279.6 L650.8 283.1 L651.3 288.1 L653.8 290.1 L656.8 291.1 L659.3 286.6 L661.8 286.6 L662.3 290.1 L664.3 294.1 L667.3 295.2 L670.4 299.2 L671.9 305.2 L674.9 308.7 L677.9 306.2 L679.4 302.2 L682.9 298.2 L683.4 292.1 L680.4 288.1 L676.4 284.1 L672.4 280.1 L668.3 276.1 L663.3 275.1 L660.8 273 L660.8 265 L662.2 262.9 L659.2 260.5 L658 255.7 L657.4 248.4 L659.8 243.6 L662.8 240 L664 235.2 L663.4 226.7 L661 220.7 L657.4 214.7 L655 209.8 L652.3 204 L383.9 204 L383.9 206.4 L382.7 214.6 L387.5 216.5 L391.1 219.5 L388.1 221.3 L383.9 223.1 L382.1 224.9 L383.3 229.1 L381.5 232.1 L380.3 235.8 L377.9 240.6 L375.5 239.4 L376.1 235.8 L377.9 232.1 L379.7 227.9 L379.1 223.1 L378.5 218.3 L377.3 212.8 L374.8 209.2 L371.2 207.2 L367.6 208.6 L367 212.2 L368.8 215.9 L370.6 219.5 L368.8 223.1 L364.6 221.3 L359.8 220.1 L353.7 221.9 L347.7 223.7 L339.3 226.1 L333.2 227.3 L331.4 229.7 L328.4 230.3 L326.6 227.9 L326.6 225.5 L326 223.1 L321.8 220.7 L321.4 226.1 L320 230.6 L316.4 229.1 L310.9 230.8 L305.5 233.5 L301.3 233.2 L301.3 237 L297.7 237 L295.3 234.5 L296.8 232.1 L296.1 227.9 L297.7 226.5 L299.2 229.7 L303.1 231.5 L307.9 230.3 L313.9 229.5 L319.1 227.1 L318.2 223.1 L315.8 218.3 L313.3 213.4 L309.7 209.6 L303.1 210.4 L299.5 206.4 L299.5 204 Z M125.9 251.4 L129.5 247.8 L134.3 245.4 L136.7 241.2 L140.9 244.2 L145.2 241.2 L147.6 244.8 L148.2 252.6 L143.4 256.9 L139.7 258.1 L132.5 256.9 L128.3 255.1 Z M128.6 265.9 L132.5 263.5 L138.5 268 L143.4 265.3 L140.9 261.7 L143.4 259.9 L148.2 257.5 L153 256.9 L154.5 252.6 L154.8 245.4 L151.8 243.6 L155.4 240.2 L160.8 239 L162.7 236.6 L167.5 232.5 L171.1 229.1 L173.8 230.9 L172.5 234.9 L169.3 237.3 L172.5 240 L167.5 243.4 L164.8 247.2 L163.6 253.2 L161.5 259.3 L159.6 264.1 L163.3 268.3 L159.6 271.9 L155.4 273.7 L154.2 277.4 L149.4 280 L143.4 278.6 L136.7 274.3 L132.5 270.1 Z M161.5 224.9 L163.3 223.1 L165.7 224.3 L165.1 226.7 L162.7 227.7 Z M159.6 230.9 L161.5 230.1 L162.7 232.1 L161.2 233.9 L159.6 233 Z M230.2 266.5 L234.7 265.4 L235 267.9 L233.3 270 Z M198.1 265.1 L199.8 264.8 L200.5 266.5 L198.8 267.2 Z M120.4 347.1 L122.9 345.3 L125.9 346.5 L126.5 349.5 L123.5 350.7 L121.1 349.5 Z M147.3 344.6 L151.9 344.6 L152.8 338.2 L154.1 337.8 L153.7 346.4 L152.8 353.7 L149.1 359.2 L145.5 360.6 L144.1 358.3 L144.6 351.9 L146.8 348.3 Z M156.9 366.5 L159.6 367.4 L167.4 367.9 L169.2 369.7 L170.5 372 L166.9 375.6 L164.6 374.7 L161 371.1 L157.8 368.3 Z M199.5 389.5 L202.2 386.5 L205.8 386.2 L214.5 387.4 L213.6 390.1 L201.9 390.4 Z M210 369.9 L212.1 369.6 L213 372.9 L212.1 374.4 L210.6 372.9 Z M242.5 397.1 L244.3 395.3 L250.3 394.7 L253.3 393.5 L252.1 396.5 L249.1 398.7 L243.1 398.7 Z M353.3 522.3 L355.7 521.1 L361.2 521.5 L362.4 522.9 L358.7 524.1 L355.1 524.1 Z M505.7 516.4 L511.2 516.4 L514.8 520.7 L518.4 526.7 L519 531.5 L516 536.3 L511.8 536.3 L507.5 532.7 L504.5 526.7 L503.9 521.9 Z M569.7 478.1 L572.1 477.3 L573.3 479.3 L571.5 480.6 Z M571.3 482.4 L573.3 481.8 L573.9 484.2 L572.1 484.8 Z M571.7 486.6 L573.9 486.2 L574.5 489 L572.7 489.6 Z M572.1 495 L575.1 495 L575.1 498.6 L572.1 498.6 Z M643.1 410.9 L646.7 409 L651.5 409.6 L652.7 414.5 L650.3 419.9 L646.7 422.9 L642.5 421.7 L641.3 418.1 L641.9 413.3 Z M687.6 358.2 L690.3 361.5 L692.4 366.8 L692.9 372.2 L691.9 378.6 L691.3 386.1 L687.6 384 L684.4 380.8 L682.2 375.4 L682.2 369 L683.3 363.1 L684.9 359.8 Z M659.8 206.2 L670.7 206.2 L671.9 209.8 L670.1 212.2 L672.5 214.7 L679.1 216.5 L686.4 215.3 L690.6 214 L691.8 206.2 L695.4 206.2 L694.2 211.6 L694.8 215.3 L691.8 219.5 L693.6 224.9 L694.8 228.5 L690 229.1 L685.2 230.9 L683.4 233.4 L685.2 235.2 L690 232.1 L693.6 232.1 L696.6 234.6 L704.5 235.2 L708.1 238.2 L711.7 243 L714.1 247.8 L717.7 252.7 L721.4 256.9 L725 261.1 L728 264.1 L727.4 267.7 L725.6 270.8 L722.6 268.3 L722 272.6 L718.9 275 L715.3 277.4 L711.7 276.2 L714.1 280.4 L715.3 284.6 L715.9 282.4 L715.3 286.6 L712.9 287.8 L710.5 287.2 L711.1 290.9 L708.1 292.1 L707.5 295.7 L706.9 299.9 L704.5 299.3 L700.8 295.7 L699.6 292.1 L697.2 292.1 L692.4 293.3 L689.4 292.1 L691.2 289.7 L693.6 284.8 L694.8 280 L694.2 281 L697.2 276.2 L701.4 275 L700.2 270.1 L700.2 265.3 L697.8 263.5 L700.8 260.5 L702.7 258.1 L700.2 255.7 L697.8 255.7 L699.6 253.3 L702.7 255.7 L703.3 253.3 L701.4 248.4 L698.4 244.8 L693.6 241.2 L691.2 239.4 L686.4 240 L680.9 238.2 L678.5 234 L676.7 230.9 L677.9 226.7 L675.5 220.7 L672.5 217.1 L667.1 214.7 L663.4 211 Z M689.4 296.3 L687.6 300.5 L686.4 304.1 L689.4 307.1 L692.4 309.6 L695.4 312 L696.6 315 L700.2 317.4 L702.7 318.6 L703.3 313.8 L703.9 309 L702.7 302.9 L700.8 298.1 L699.6 294.5 L693.6 295.1 Z M676.1 312.6 L678.5 311.4 L679.7 313.2 L677.9 315 Z M703.3 337.9 L706.9 337.3 L708.1 340.3 L705.7 342.7 L703.3 343.9 Z M698.6 396.6 L701.6 396 L705.2 392.4 L710.7 395.4 L712.5 399 L711.3 404.5 L711.9 409.9 L714.9 414.1 L716.7 415.9 L720.3 414.7 L723.9 415.3 L727 413.5 L731.2 414.1 L732.4 415.9 L728.8 419.6 L723.9 421.4 L720.3 423.2 L716.1 423.8 L711.9 422.6 L708.3 420.2 L705.2 416.5 L702.2 411.7 L701 405.7 L699.2 401.5 Z M734.8 412.9 L737.2 410.5 L743.2 409.9 L743.2 417.1 L737.2 415.9 Z M713.7 426.8 L719.1 425.6 L721.5 427.4 L719.1 432.2 L716.7 431 Z M723.3 431.6 L727.6 430.4 L731.2 431.6 L730 435.8 L727.6 438.3 L725.1 436.4 Z M729.4 438.3 L732.4 434 L735.4 435.2 L734.2 439.5 L731.2 441.9 Z M730.6 421.4 L733.6 420.2 L734.8 422 L732.4 424.4 Z M723.3 424.4 L725.8 423.8 L726.4 425.2 L723.9 426 Z M712.5 434 L714.9 433.4 L715.7 435.2 L713.1 435.8 Z M737.2 435.2 L743.2 434.6 L743.2 437.7 L737.8 437.3 Z M711.3 440.7 L713.1 443.1 L712.5 449.1 L710.7 452.7 L708.3 455.8 L705.8 458.8 L703.4 460.6 L704 457 L706.4 453.9 L708.3 450.3 L709.5 445.5 Z M706.4 476 L704.6 481.5 L701 483.9 L696.8 486.9 L695.6 492.9 L692.6 499 L690.2 503.8 L685.3 508.6 L681.7 509.8 L678.7 513.4 L676.3 518.3 L678.1 523.1 L682.9 527.9 L687.7 531.5 L692.6 535.1 L696.2 537.6 L702.2 537 L708.3 533.9 L714.3 533.3 L718.5 535.1 L722.7 531.5 L726.4 527.9 L725.8 520.7 L727.6 514.6 L729.4 508.6 L728.8 502.6 L732.4 500.8 L736 499 L733 494.7 L727.6 492.9 L725.1 489.3 L721.5 486.3 L718.5 484.5 L719.7 481.5 L723.3 480.9 L721.5 477.8 L726.4 475.4 L724.5 471.8 L722.7 470.8 L717.9 470.2 L714.3 467.2 L709.5 468.4 L707.7 473.2 Z M597.8 519.8 L600.9 517.4 L614.1 517.4 L618.9 520.4 L626.2 524.6 L633.4 527.6 L640.7 529.4 L644.9 533.1 L646.7 537.3 L652.7 539.1 L657.5 540.3 L661.2 543.9 L663 551.2 L664.2 557.2 L659.9 559 L655.1 557.2 L647.9 553.6 L640.7 549.9 L633.4 545.7 L628.6 541.5 L622.6 537.9 L616.5 534.3 L611.7 529.4 L605.7 526.4 L601.5 524 Z M658.1 536.7 L660.6 534.9 L663.6 539.1 L662.4 540.9 L659.3 539.1 Z M666.7 561.4 L668.5 557.8 L677.4 557.2 L682.1 555.8 L686.9 556.7 L690.4 559 L694.6 559 L698.1 557.2 L705.8 557.5 L710.6 557.8 L717.1 558.4 L718.3 562 L723.6 562 L726.5 563.8 L726.5 567.9 L722.4 569.1 L715.3 567.7 L709.4 567.9 L703.4 569.1 L699.9 567.3 L694 565.5 L686.9 566.1 L682.1 567.7 L677.4 567.3 L673.8 564.9 L669.1 563.8 Z M720 559 L723 557.8 L728.3 557.5 L728.9 560.2 L724.8 561.7 L721.2 561 Z M729.5 566.1 L733.1 565.3 L736.6 564.4 L737.8 566.1 L734.2 567.9 L730.7 568.1 Z" fill="none" stroke="#04087e" stroke-width="1" stroke-linejoin="round" shape-rendering="crispEdges"/>
<path d="M321.2 223.1 L320.6 227.3 L317.6 229.1 L313.9 230.9 L307.9 231.8 L303.1 233 L300.1 232.1 L300.7 235.2 L301.3 237.8 L297.1 237.6 L294.9 234.5 L296.5 232.1 L295.9 227.3 L297.7 225.7 L299.7 229.1 L303.1 230.3 L307.9 229.1 L313.9 228.2 L318.2 226.1 L319.4 223.1 Z M326.6 226.1 L329.6 224.9 L332.6 227.3 L331.4 229.7 L328.4 230.6 L326.6 228.5 Z M702.7 282.8 L706.3 280.4 L709.9 282.2 L711.1 286.4 L714.7 288.2 L712.9 290.1 L708.7 290.1 L705.1 288.2 Z" fill="#00000c" stroke="#0a0f8e" stroke-width="0.9"/>
<path d="M314.5 339.7 L318.8 334.8 L323.1 330.6 L327.9 328.4 L332.2 327.3 L333.8 331.1 L332.2 334.3 L332.7 338.1 L329.5 340.7 L324.7 341.8 L325.2 344.5 L330 347.7 L334.3 350.9 L337 354.7 L338.1 356.3 L340.8 354.2 L342.9 354.7 L344 357.4 L341.3 360.6 L339.7 362.7 L342.9 364.9 L343.4 369.7 L344.5 375.1 L343.4 379.4 L340.2 381 L338.6 383.7 L334.3 384.2 L331.1 382 L328.4 378.3 L326.3 374 L327.4 370.2 L331.6 368.1 L332.7 364.9 L329.5 363.8 L325.7 360.6 L327.4 357.9 L319.8 356.8 L318.2 351.5 L318.8 346.6 L316.1 342.9 Z M368.7 325.7 L370.8 325.2 L375.6 330.6 L373.5 334.3 L374 338.1 L372.9 342.4 L369.7 345.6 L367 347.2 L364.4 346.6 L362.8 341.8 L363.3 335.9 L366 332.2 L367.6 328.4 Z M540.6 235.1 L542.6 238.3 L542.2 242.3 L540.6 245.6 L541 248.8 L538.1 251.2 L535.3 254.4 L534.1 252 L535.7 248.4 L538.1 246.4 L538.5 239.1 Z" fill="#0a5c8c" stroke="#06188c" stroke-width="1"/>
<path d="M295.6 207.3 L293.6 216.6 L291 221.9 L293 230.5 L287 236.4 L281.7 242.4 L277.1 247 L276.4 252.3 L271.1 256.3 L266.5 256 L263.2 255.6" fill="none" stroke="#1f6414" stroke-width="0.9"/>
<path d="M309.5 237.1 L313.5 241.1 L310.8 245.7 L312.8 251 L314.8 258.9 L318.1 265.5 L316.1 273.5 L319.4 280.1 L321.4 288 L320.1 292 L313.5 302" fill="none" stroke="#1f6414" stroke-width="0.9"/>
<path d="M218.2 279.4 L212.9 282.1 L209 286.7 L211 290.7 L205 292" fill="none" stroke="#1f6414" stroke-width="0.9"/>
<path d="M373.4 223.9 L375.4 232.5 L370.7 241.7 L368.8 251 L366.1 260.2 L367.4 269.5 L363.5 278.8 L362.8 285.4 L366.8 293.3 L367.4 302" fill="none" stroke="#1f6414" stroke-width="0.9"/>
<path d="M367.4 302 L370.7 298.6 L376 297.3 L382.7 298.6 L384 292 L389.3 285.4 L395.9 286.7 L401.2 292 L407.8 296 L410.4 301.2 L418.4 297.3 L425 297.9 L429 296 L434.2 298.6 L439.5 302" fill="none" stroke="#1f6414" stroke-width="0.9"/>
<path d="M458.7 207.3 L462 213.9 L463.3 223.2 L467.3 229.8 L464.7 237.7 L471.3 240.4" fill="none" stroke="#1f6414" stroke-width="0.9"/>
<path d="M473 284 L470 290.7 L467.3 297.3 L463.3 302" fill="none" stroke="#1f6414" stroke-width="0.9"/>
<path d="M473 238.4 L480.9 244.4 L488.9 241.1 L494.2 243 L499.5 249.7 L506.1 244.4 L511.4 245.7 L516.7 254.3 L523.9 253.6 L532.5 244.4 L537.8 244.4" fill="none" stroke="#1f6414" stroke-width="0.9"/>
<path d="M543.1 244.4 L547.7 249 L552.4 248.3 L555.7 240.4 L560.3 233.8 L565.6 227.2 L570.2 221.9 L574.2 213.9 L577.5 207.3" fill="none" stroke="#1f6414" stroke-width="0.9"/>
<path d="M570.2 221.9 L578.8 221.2 L585.4 223.9 L592.1 225.8 L600 228.5 L607 225.2" fill="none" stroke="#1f6414" stroke-width="0.9"/>
<path d="M516.7 254.3 L511.4 261.6 L504.7 268.2 L499.5 265.5 L491.5 261.6 L483.6 258.3 L479.6 264.2 L478.3 269.5 L480.9 276.1 L486.2 278.8 L486.9 288 L487.6 302" fill="none" stroke="#1f6414" stroke-width="0.9"/>
<path d="M480.9 276.1 L475.6 280.1 L473 284" fill="none" stroke="#1f6414" stroke-width="0.9"/>
<path d="M607 266.8 L598.7 267.5 L592.1 269.5 L588.7 273.5 L590.7 278.1 L585.4 285.4 L581.5 293.3 L576.2 298.6 L573.5 302" fill="none" stroke="#1f6414" stroke-width="0.9"/>
<path d="M607 225.2 L612.3 224.5 L616.3 231.1 L615.6 236.4 L619.6 241.1 L622.9 241.7 L622.9 235.1 L625.5 228.5 L630.8 223.9 L638.7 223.2 L644 225.2 L649.3 223.9 L653.3 227.2 L652.6 235.1 L653.3 241.7 L659.3 242.4" fill="none" stroke="#1f6414" stroke-width="0.9"/>
<path d="M615.6 236.4 L611 241.7 L607.7 247 L608.3 254.9 L607 258.9" fill="none" stroke="#1f6414" stroke-width="0.9"/>
<path d="M657.9 260.2 L655.9 265.5 L653.3 269.5 L649.3 273.5 L648 278.8" fill="none" stroke="#1f6414" stroke-width="0.9"/>
<path d="M147.7 306.6 L143.8 309.3 L139.8 315.2 L142.4 321.8 L143.1 328.5 L141.1 332.4" fill="none" stroke="#1f6414" stroke-width="0.9"/>
<path d="M71 381.4 L90.8 381.4 L104.1 386.7 L117.3 392 L129.2 397.2" fill="none" stroke="#1f6414" stroke-width="0.9"/>
<path d="M205 308.6 L212.9 309.3 L219.6 309.9 L224.8 315.2 L226.8 319.2 L225.5 325.8 L222.9 333.1 L228.1 337.7 L232.8 336.4 L236.7 341.7" fill="none" stroke="#1f6414" stroke-width="0.9"/>
<path d="M314.8 302 L310.8 308.6 L305.5 315.2 L306.9 321.8 L312.1 323.8 L315.5 329.8 L318.8 334.4" fill="none" stroke="#1f6414" stroke-width="0.9"/>
<path d="M289 356.2 L295 356.2 L298.9 354.3 L304.2 355.6 L306.9 358.2 L310.8 360.2 L314.8 357.6 L318.8 357.6" fill="none" stroke="#1f6414" stroke-width="0.9"/>
<path d="M298.9 358.9 L295 360.9 L293 366.8 L296.3 372.1 L297.6 378.7 L300.2 384 L301.6 390.6 L305.5 398" fill="none" stroke="#1f6414" stroke-width="0.9"/>
<path d="M244.7 386.7 L247.3 382.7 L253.9 380 L260.6 378.7 L265.8 378.7 L267.2 386.7 L266.5 393.3 L268.5 398" fill="none" stroke="#1f6414" stroke-width="0.9"/>
<path d="M368.1 302 L364.1 308.6 L362.1 315.2 L358.8 323.2 L354.9 329.8 L346.9 332.4 L339 333.7" fill="none" stroke="#1f6414" stroke-width="0.9"/>
<path d="M410.4 302 L408.4 306 L413.1 309.3 L413.1 316.6 L410.4 320.5 L409.8 328.5 L409.1 339 L412.4 343 L417 347.6 L422.3 349.6 L425 352.9 L433.6 353.6" fill="none" stroke="#1f6414" stroke-width="0.9"/>
<path d="M433.6 354.9 L430.3 358.9 L432.9 364.2 L437.5 370.8 L439.5 376.1 L444.8 380 L451.4 385.3 L452.8 389.3 L458.1 393.3 L466 398" fill="none" stroke="#1f6414" stroke-width="0.9"/>
<path d="M437.5 370.8 L444.8 366.8 L450.1 363.5 L455.4 363.5 L460.7 366.2 L473 366.2" fill="none" stroke="#1f6414" stroke-width="0.9"/>
<path d="M452.8 389.3 L444.8 390.6 L439.5 393.3 L434.2 394.6 L431.6 398" fill="none" stroke="#1f6414" stroke-width="0.9"/>
<path d="M343 378.7 L349.6 377.4 L353.6 375.4 L357.5 377.4 L362.8 380 L366.8 381.4 L370.7 376.7 L376 377.4 L385.3 380 L386 386.7 L389.9 392 L389.9 398" fill="none" stroke="#1f6414" stroke-width="0.9"/>
<path d="M440.2 302 L444.8 304 L451.4 303.3 L458.1 304.6 L464.7 302.7" fill="none" stroke="#1f6414" stroke-width="0.9"/>
<path d="M487.6 303.3 L492.8 304.6 L499.5 304 L507.4 306 L512.7 308.6 L510.7 311.3 L512.7 316.6 L515.3 319.9 L514 325.8 L516 330.4 L517.3 333.1" fill="none" stroke="#1f6414" stroke-width="0.9"/>
<path d="M512.7 313.2 L516.7 309.9 L523.3 308.6 L531.2 309.9 L535.8 313.9 L544.4 311.3 L555 309.9 L564.3 308.6 L568.2 304.6 L570.9 302" fill="none" stroke="#1f6414" stroke-width="0.9"/>
<path d="M517.3 336.4 L520.6 337.7 L523.3 336.4 L527.2 341 L533.8 342.3 L540.5 340.4 L543.8 345 L548.4 345 L552.4 343 L555.7 345.7 L557 350.3 L561.6 353.6" fill="none" stroke="#1f6414" stroke-width="0.9"/>
<path d="M516 337.1 L510 343 L505.4 344.3 L503.4 350.9 L499.5 356.2 L495.5 360.2 L487.6 363.5 L479.6 366.2 L473 366.6" fill="none" stroke="#1f6414" stroke-width="0.9"/>
<path d="M561.6 353.6 L568.2 355.6 L577.5 358.2 L585.4 360.2 L590.7 359.5 L596 354.3 L601.3 350.9 L607 349" fill="none" stroke="#1f6414" stroke-width="0.9"/>
<path d="M561.6 354.9 L560.3 360.2 L561 364.2 L559 366.8 L561.6 370.8 L560.3 377.4 L559.6 382 L553.7 388 L548.4 393.3 L543.1 397.2" fill="none" stroke="#1f6414" stroke-width="0.9"/>
<path d="M560.3 382 L564.3 380 L566.9 384 L568.2 392 L570.2 393.9 L577.5 392 L578.8 398" fill="none" stroke="#1f6414" stroke-width="0.9"/>
<path d="M584.8 385.3 L585.4 392 L585.4 398" fill="none" stroke="#1f6414" stroke-width="0.9"/>
<path d="M586.1 385.3 L590.7 390.6 L590.7 398" fill="none" stroke="#1f6414" stroke-width="0.9"/>
<path d="M607 348.3 L614.9 347.6 L622.9 347 L626.8 339.7 L630.8 339.7 L637.4 342.3 L645.4 344.3 L652 349 L656.6 350.3 L657.9 344.3 L657.3 337.7 L658.6 331.1 L659.9 326.5 L669.2 325.5" fill="none" stroke="#1f6414" stroke-width="0.9"/>
<path d="M129.2 398 L137.1 403.3 L145.1 409.9 L153 417.8 L163.6 421.8 L172.9 424.5 L183.4 423.1 L194 421.8 L205 419.8" fill="none" stroke="#1f6414" stroke-width="0.9"/>
<path d="M266.5 402 L264.5 407.3 L260.6 412.6 L255.9 419.2 L252.6 424.5 L253.3 429.7" fill="none" stroke="#1f6414" stroke-width="0.9"/>
<path d="M205 416.5 L207 431.1 L208.3 445.6 L212.9 452.2 L216.2 460.2 L218.2 469.4 L220.2 478.7 L222.2 488 L224.8 494" fill="none" stroke="#1f6414" stroke-width="0.9"/>
<path d="M254.6 454.9 L248.7 461.5 L242 469.4 L235.4 476 L229.5 478.7 L226.2 485.3 L222.2 489.3" fill="none" stroke="#1f6414" stroke-width="0.9"/>
<path d="M306.9 398 L310.8 402 L317.4 405.9 L324.1 410.6 L326.7 416.5 L324.1 423.1" fill="none" stroke="#1f6414" stroke-width="0.9"/>
<path d="M389.9 398 L391.3 405.9 L395.9 412.6 L400.5 415.2 L405.1 412.6 L411.8 410.6 L419.7 410.6 L425 412.6 L425.6 417.8 L423 424.5 L421 431.1 L417 436.4 L413.1 441 L409.8 444.3" fill="none" stroke="#1f6414" stroke-width="0.9"/>
<path d="M430.9 398 L426.3 402 L419.7 404 L416.4 409.2" fill="none" stroke="#1f6414" stroke-width="0.9"/>
<path d="M466 398 L471.3 402 L473 404.6" fill="none" stroke="#1f6414" stroke-width="0.9"/>
<path d="M473 404.6 L475.6 401.3 L479 404.6 L482.3 409.2 L488.9 411.9 L499.5 411.9 L510 411.2 L519.3 410.6 L525.9 407.3 L532.5 404 L539.1 400.6 L542.4 398" fill="none" stroke="#1f6414" stroke-width="0.9"/>
<path d="M519.3 410.6 L516.7 414.5 L523.3 417.2 L529.9 417.8 L533.8 421.8 L536.5 428.4 L540.5 433.7 L543.1 436.4" fill="none" stroke="#1f6414" stroke-width="0.9"/>
<path d="M578.8 398 L582.8 402 L586.8 402.6" fill="none" stroke="#1f6414" stroke-width="0.9"/>
<path d="M590.7 403.3 L596 409.2 L601.3 415.2 L607 417.8" fill="none" stroke="#1f6414" stroke-width="0.9"/>
<path d="M607 418.5 L616.3 418.5 L622.9 421.8 L628.2 422.5" fill="none" stroke="#1f6414" stroke-width="0.9"/>
<path d="M224.2 494 L228.8 507.2 L232.8 523.1 L238.1 536.3 L244.7 552.2 L255.3 561.5 L259.2 573.4 L264.5 588.6" fill="none" stroke="#1f6414" stroke-width="0.9"/>
<path d="M154 240h4v4h-4zM161 241h4v4h-4zM139 249h4v4h-4zM154 249h4v4h-4zM157 255h4v4h-4zM140 263h4v4h-4zM143 266h4v4h-4zM157 267h4v4h-4zM148 271h4v4h-4zM164 271h4v4h-4zM183 271h4v4h-4zM160 276h4v4h-4zM154 279h4v4h-4zM169 280h4v4h-4zM178 278h4v4h-4zM196 276h4v4h-4zM192 282h4v4h-4zM140 286h4v4h-4zM161 286h4v4h-4zM147 289h4v4h-4zM155 288h4v4h-4zM152 292h4v4h-4zM167 292h4v4h-4zM126 290h4v4h-4zM135 296h4v4h-4zM145 295h4v4h-4zM159 295h4v4h-4zM175 295h4v4h-4zM189 294h4v4h-4zM178 299h4v4h-4zM198 232h4v4h-4zM202 245h4v4h-4zM195 261h4v4h-4zM202 290h4v4h-4zM203 254h4v4h-4zM223 253h4v4h-4zM247 252h4v4h-4zM213 264h4v4h-4zM257 264h4v4h-4zM291 264h4v4h-4zM235 272h4v4h-4zM280 277h4v4h-4zM219 282h4v4h-4zM259 283h4v4h-4zM297 284h4v4h-4zM254 299h4v4h-4zM336 295h4v4h-4zM531 229h4v4h-4zM547 242h4v4h-4zM572 239h4v4h-4zM558 251h4v4h-4zM517 257h4v4h-4zM542 258h4v4h-4zM592 258h4v4h-4zM567 263h4v4h-4zM603 265h4v4h-4zM490 270h4v4h-4zM577 277h4v4h-4zM590 283h4v4h-4zM536 285h4v4h-4zM498 295h4v4h-4zM479 299h4v4h-4zM562 300h4v4h-4zM602 299h4v4h-4zM647 210h4v4h-4zM678 221h4v4h-4zM633 241h4v4h-4zM701 240h4v4h-4zM610 252h4v4h-4zM715 264h4v4h-4zM639 267h4v4h-4zM617 270h4v4h-4zM703 274h4v4h-4zM649 279h4v4h-4zM664 280h4v4h-4zM659 282h4v4h-4zM617 291h4v4h-4zM676 294h4v4h-4zM690 296h4v4h-4zM132 304h4v4h-4zM122 310h4v4h-4zM139 309h4v4h-4zM159 306h4v4h-4zM173 308h4v4h-4zM185 311h4v4h-4zM95 314h4v4h-4zM81 317h4v4h-4zM154 314h4v4h-4zM145 317h4v4h-4zM111 320h4v4h-4zM117 321h4v4h-4zM126 322h4v4h-4zM169 322h4v4h-4zM196 321h4v4h-4zM74 326h4v4h-4zM99 327h4v4h-4zM146 325h4v4h-4zM109 329h4v4h-4zM136 328h4v4h-4zM153 328h4v4h-4zM165 329h4v4h-4zM95 332h4v4h-4zM120 331h4v4h-4zM177 333h4v4h-4zM197 331h4v4h-4zM87 338h4v4h-4zM148 337h4v4h-4zM163 337h4v4h-4zM104 341h4v4h-4zM91 345h4v4h-4zM121 344h4v4h-4zM161 344h4v4h-4zM197 343h4v4h-4zM77 350h4v4h-4zM143 350h4v4h-4zM170 350h4v4h-4zM188 353h4v4h-4zM93 362h4v4h-4zM121 362h4v4h-4zM158 363h4v4h-4zM189 362h4v4h-4zM73 364h4v4h-4zM142 370h4v4h-4zM203 358h4v4h-4zM202 369h4v4h-4zM147 395h4v4h-4zM211 303h4v4h-4zM235 311h4v4h-4zM278 320h4v4h-4zM319 320h4v4h-4zM241 331h4v4h-4zM260 335h4v4h-4zM311 334h4v4h-4zM210 337h4v4h-4zM225 339h4v4h-4zM283 346h4v4h-4zM260 350h4v4h-4zM231 352h4v4h-4zM239 356h4v4h-4zM277 358h4v4h-4zM303 359h4v4h-4zM247 363h4v4h-4zM263 365h4v4h-4zM221 371h4v4h-4zM248 371h4v4h-4zM318 371h4v4h-4zM272 374h4v4h-4zM239 377h4v4h-4zM260 378h4v4h-4zM290 383h4v4h-4zM334 382h4v4h-4zM206 384h4v4h-4zM258 388h4v4h-4zM315 390h4v4h-4zM243 393h4v4h-4zM333 395h4v4h-4zM458 308h4v4h-4zM464 320h4v4h-4zM373 322h4v4h-4zM392 329h4v4h-4zM411 328h4v4h-4zM426 334h4v4h-4zM367 346h4v4h-4zM411 344h4v4h-4zM432 350h4v4h-4zM389 352h4v4h-4zM443 354h4v4h-4zM405 358h4v4h-4zM466 359h4v4h-4zM362 369h4v4h-4zM406 372h4v4h-4zM367 387h4v4h-4zM412 391h4v4h-4zM429 390h4v4h-4zM590 307h4v4h-4zM484 313h4v4h-4zM536 315h4v4h-4zM572 315h4v4h-4zM500 320h4v4h-4zM560 322h4v4h-4zM517 332h4v4h-4zM547 332h4v4h-4zM603 334h4v4h-4zM587 338h4v4h-4zM567 340h4v4h-4zM495 346h4v4h-4zM581 350h4v4h-4zM535 352h4v4h-4zM518 356h4v4h-4zM584 363h4v4h-4zM521 374h4v4h-4zM543 375h4v4h-4zM599 379h4v4h-4zM585 381h4v4h-4zM528 394h4v4h-4zM605 368h4v4h-4zM623 304h4v4h-4zM642 307h4v4h-4zM630 317h4v4h-4zM643 320h4v4h-4zM696 314h4v4h-4zM620 329h4v4h-4zM667 329h4v4h-4zM646 333h4v4h-4zM703 338h4v4h-4zM676 345h4v4h-4zM623 347h4v4h-4zM651 350h4v4h-4zM637 353h4v4h-4zM660 354h4v4h-4zM673 365h4v4h-4zM637 369h4v4h-4zM686 371h4v4h-4zM633 384h4v4h-4zM657 390h4v4h-4zM623 394h4v4h-4zM83 411h4v4h-4zM175 402h4v4h-4zM198 405h4v4h-4zM141 445h4v4h-4zM77 457h4v4h-4zM128 481h4v4h-4zM79 490h4v4h-4zM262 399h4v4h-4zM251 402h4v4h-4zM208 407h4v4h-4zM228 406h4v4h-4zM302 401h4v4h-4zM254 412h4v4h-4zM237 414h4v4h-4zM316 420h4v4h-4zM256 424h4v4h-4zM326 442h4v4h-4zM244 448h4v4h-4zM269 450h4v4h-4zM246 467h4v4h-4zM275 476h4v4h-4zM247 488h4v4h-4zM380 401h4v4h-4zM447 400h4v4h-4zM342 414h4v4h-4zM431 415h4v4h-4zM466 418h4v4h-4zM340 428h4v4h-4zM424 428h4v4h-4zM454 431h4v4h-4zM355 433h4v4h-4zM417 440h4v4h-4zM404 442h4v4h-4zM379 456h4v4h-4zM454 464h4v4h-4zM470 475h4v4h-4zM456 479h4v4h-4zM361 489h4v4h-4zM586 399h4v4h-4zM600 403h4v4h-4zM506 409h4v4h-4zM485 422h4v4h-4zM544 425h4v4h-4zM577 425h4v4h-4zM506 430h4v4h-4zM532 434h4v4h-4zM554 436h4v4h-4zM597 434h4v4h-4zM572 440h4v4h-4zM599 448h4v4h-4zM516 450h4v4h-4zM583 453h4v4h-4zM493 462h4v4h-4zM604 461h4v4h-4zM602 474h4v4h-4zM497 484h4v4h-4zM637 401h4v4h-4zM646 413h4v4h-4zM626 416h4v4h-4zM707 418h4v4h-4zM716 420h4v4h-4zM635 432h4v4h-4zM651 442h4v4h-4zM707 450h4v4h-4zM624 456h4v4h-4zM653 459h4v4h-4zM634 468h4v4h-4zM697 484h4v4h-4zM617 492h4v4h-4zM79 525h4v4h-4zM122 537h4v4h-4zM259 506h4v4h-4zM331 507h4v4h-4zM305 514h4v4h-4zM295 525h4v4h-4zM275 533h4v4h-4zM327 567h4v4h-4zM344 499h4v4h-4zM482 502h4v4h-4zM476 514h4v4h-4zM492 520h4v4h-4zM507 524h4v4h-4zM572 495h4v4h-4zM602 517h4v4h-4zM643 506h4v4h-4zM685 506h4v4h-4zM723 501h4v4h-4zM652 521h4v4h-4zM686 526h4v4h-4zM711 529h4v4h-4zM649 536h4v4h-4zM657 554h4v4h-4zM684 561h4v4h-4zM704 562h4v4h-4z" fill="#d80000"/>
<path d="M154 240v4h4v-4h-1v3h-3zM161 241v4h4v-4h-1v3h-3zM139 249v4h4v-4h-1v3h-3zM154 249v4h4v-4h-1v3h-3zM157 255v4h4v-4h-1v3h-3zM140 263v4h4v-4h-1v3h-3zM143 266v4h4v-4h-1v3h-3zM157 267v4h4v-4h-1v3h-3zM148 271v4h4v-4h-1v3h-3zM164 271v4h4v-4h-1v3h-3zM183 271v4h4v-4h-1v3h-3zM160 276v4h4v-4h-1v3h-3zM154 279v4h4v-4h-1v3h-3zM169 280v4h4v-4h-1v3h-3zM178 278v4h4v-4h-1v3h-3zM196 276v4h4v-4h-1v3h-3zM192 282v4h4v-4h-1v3h-3zM140 286v4h4v-4h-1v3h-3zM161 286v4h4v-4h-1v3h-3zM147 289v4h4v-4h-1v3h-3zM155 288v4h4v-4h-1v3h-3zM152 292v4h4v-4h-1v3h-3zM167 292v4h4v-4h-1v3h-3zM126 290v4h4v-4h-1v3h-3zM135 296v4h4v-4h-1v3h-3zM145 295v4h4v-4h-1v3h-3zM159 295v4h4v-4h-1v3h-3zM175 295v4h4v-4h-1v3h-3zM189 294v4h4v-4h-1v3h-3zM178 299v4h4v-4h-1v3h-3zM198 232v4h4v-4h-1v3h-3zM202 245v4h4v-4h-1v3h-3zM195 261v4h4v-4h-1v3h-3zM202 290v4h4v-4h-1v3h-3zM203 254v4h4v-4h-1v3h-3zM223 253v4h4v-4h-1v3h-3zM247 252v4h4v-4h-1v3h-3zM213 264v4h4v-4h-1v3h-3zM257 264v4h4v-4h-1v3h-3zM291 264v4h4v-4h-1v3h-3zM235 272v4h4v-4h-1v3h-3zM280 277v4h4v-4h-1v3h-3zM219 282v4h4v-4h-1v3h-3zM259 283v4h4v-4h-1v3h-3zM297 284v4h4v-4h-1v3h-3zM254 299v4h4v-4h-1v3h-3zM336 295v4h4v-4h-1v3h-3zM531 229v4h4v-4h-1v3h-3zM547 242v4h4v-4h-1v3h-3zM572 239v4h4v-4h-1v3h-3zM558 251v4h4v-4h-1v3h-3zM517 257v4h4v-4h-1v3h-3zM542 258v4h4v-4h-1v3h-3zM592 258v4h4v-4h-1v3h-3zM567 263v4h4v-4h-1v3h-3zM603 265v4h4v-4h-1v3h-3zM490 270v4h4v-4h-1v3h-3zM577 277v4h4v-4h-1v3h-3zM590 283v4h4v-4h-1v3h-3zM536 285v4h4v-4h-1v3h-3zM498 295v4h4v-4h-1v3h-3zM479 299v4h4v-4h-1v3h-3zM562 300v4h4v-4h-1v3h-3zM602 299v4h4v-4h-1v3h-3zM647 210v4h4v-4h-1v3h-3zM678 221v4h4v-4h-1v3h-3zM633 241v4h4v-4h-1v3h-3zM701 240v4h4v-4h-1v3h-3zM610 252v4h4v-4h-1v3h-3zM715 264v4h4v-4h-1v3h-3zM639 267v4h4v-4h-1v3h-3zM617 270v4h4v-4h-1v3h-3zM703 274v4h4v-4h-1v3h-3zM649 279v4h4v-4h-1v3h-3zM664 280v4h4v-4h-1v3h-3zM659 282v4h4v-4h-1v3h-3zM617 291v4h4v-4h-1v3h-3zM676 294v4h4v-4h-1v3h-3zM690 296v4h4v-4h-1v3h-3zM132 304v4h4v-4h-1v3h-3zM122 310v4h4v-4h-1v3h-3zM139 309v4h4v-4h-1v3h-3zM159 306v4h4v-4h-1v3h-3zM173 308v4h4v-4h-1v3h-3zM185 311v4h4v-4h-1v3h-3zM95 314v4h4v-4h-1v3h-3zM81 317v4h4v-4h-1v3h-3zM154 314v4h4v-4h-1v3h-3zM145 317v4h4v-4h-1v3h-3zM111 320v4h4v-4h-1v3h-3zM117 321v4h4v-4h-1v3h-3zM126 322v4h4v-4h-1v3h-3zM169 322v4h4v-4h-1v3h-3zM196 321v4h4v-4h-1v3h-3zM74 326v4h4v-4h-1v3h-3zM99 327v4h4v-4h-1v3h-3zM146 325v4h4v-4h-1v3h-3zM109 329v4h4v-4h-1v3h-3zM136 328v4h4v-4h-1v3h-3zM153 328v4h4v-4h-1v3h-3zM165 329v4h4v-4h-1v3h-3zM95 332v4h4v-4h-1v3h-3zM120 331v4h4v-4h-1v3h-3zM177 333v4h4v-4h-1v3h-3zM197 331v4h4v-4h-1v3h-3zM87 338v4h4v-4h-1v3h-3zM148 337v4h4v-4h-1v3h-3zM163 337v4h4v-4h-1v3h-3zM104 341v4h4v-4h-1v3h-3zM91 345v4h4v-4h-1v3h-3zM121 344v4h4v-4h-1v3h-3zM161 344v4h4v-4h-1v3h-3zM197 343v4h4v-4h-1v3h-3zM77 350v4h4v-4h-1v3h-3zM143 350v4h4v-4h-1v3h-3zM170 350v4h4v-4h-1v3h-3zM188 353v4h4v-4h-1v3h-3zM93 362v4h4v-4h-1v3h-3zM121 362v4h4v-4h-1v3h-3zM158 363v4h4v-4h-1v3h-3zM189 362v4h4v-4h-1v3h-3zM73 364v4h4v-4h-1v3h-3zM142 370v4h4v-4h-1v3h-3zM203 358v4h4v-4h-1v3h-3zM202 369v4h4v-4h-1v3h-3zM147 395v4h4v-4h-1v3h-3zM211 303v4h4v-4h-1v3h-3zM235 311v4h4v-4h-1v3h-3zM278 320v4h4v-4h-1v3h-3zM319 320v4h4v-4h-1v3h-3zM241 331v4h4v-4h-1v3h-3zM260 335v4h4v-4h-1v3h-3zM311 334v4h4v-4h-1v3h-3zM210 337v4h4v-4h-1v3h-3zM225 339v4h4v-4h-1v3h-3zM283 346v4h4v-4h-1v3h-3zM260 350v4h4v-4h-1v3h-3zM231 352v4h4v-4h-1v3h-3zM239 356v4h4v-4h-1v3h-3zM277 358v4h4v-4h-1v3h-3zM303 359v4h4v-4h-1v3h-3zM247 363v4h4v-4h-1v3h-3zM263 365v4h4v-4h-1v3h-3zM221 371v4h4v-4h-1v3h-3zM248 371v4h4v-4h-1v3h-3zM318 371v4h4v-4h-1v3h-3zM272 374v4h4v-4h-1v3h-3zM239 377v4h4v-4h-1v3h-3zM260 378v4h4v-4h-1v3h-3zM290 383v4h4v-4h-1v3h-3zM334 382v4h4v-4h-1v3h-3zM206 384v4h4v-4h-1v3h-3zM258 388v4h4v-4h-1v3h-3zM315 390v4h4v-4h-1v3h-3zM243 393v4h4v-4h-1v3h-3zM333 395v4h4v-4h-1v3h-3zM458 308v4h4v-4h-1v3h-3zM464 320v4h4v-4h-1v3h-3zM373 322v4h4v-4h-1v3h-3zM392 329v4h4v-4h-1v3h-3zM411 328v4h4v-4h-1v3h-3zM426 334v4h4v-4h-1v3h-3zM367 346v4h4v-4h-1v3h-3zM411 344v4h4v-4h-1v3h-3zM432 350v4h4v-4h-1v3h-3zM389 352v4h4v-4h-1v3h-3zM443 354v4h4v-4h-1v3h-3zM405 358v4h4v-4h-1v3h-3zM466 359v4h4v-4h-1v3h-3zM362 369v4h4v-4h-1v3h-3zM406 372v4h4v-4h-1v3h-3zM367 387v4h4v-4h-1v3h-3zM412 391v4h4v-4h-1v3h-3zM429 390v4h4v-4h-1v3h-3zM590 307v4h4v-4h-1v3h-3zM484 313v4h4v-4h-1v3h-3zM536 315v4h4v-4h-1v3h-3zM572 315v4h4v-4h-1v3h-3zM500 320v4h4v-4h-1v3h-3zM560 322v4h4v-4h-1v3h-3zM517 332v4h4v-4h-1v3h-3zM547 332v4h4v-4h-1v3h-3zM603 334v4h4v-4h-1v3h-3zM587 338v4h4v-4h-1v3h-3zM567 340v4h4v-4h-1v3h-3zM495 346v4h4v-4h-1v3h-3zM581 350v4h4v-4h-1v3h-3zM535 352v4h4v-4h-1v3h-3zM518 356v4h4v-4h-1v3h-3zM584 363v4h4v-4h-1v3h-3zM521 374v4h4v-4h-1v3h-3zM543 375v4h4v-4h-1v3h-3zM599 379v4h4v-4h-1v3h-3zM585 381v4h4v-4h-1v3h-3zM528 394v4h4v-4h-1v3h-3zM605 368v4h4v-4h-1v3h-3zM623 304v4h4v-4h-1v3h-3zM642 307v4h4v-4h-1v3h-3zM630 317v4h4v-4h-1v3h-3zM643 320v4h4v-4h-1v3h-3zM696 314v4h4v-4h-1v3h-3zM620 329v4h4v-4h-1v3h-3zM667 329v4h4v-4h-1v3h-3zM646 333v4h4v-4h-1v3h-3zM703 338v4h4v-4h-1v3h-3zM676 345v4h4v-4h-1v3h-3zM623 347v4h4v-4h-1v3h-3zM651 350v4h4v-4h-1v3h-3zM637 353v4h4v-4h-1v3h-3zM660 354v4h4v-4h-1v3h-3zM673 365v4h4v-4h-1v3h-3zM637 369v4h4v-4h-1v3h-3zM686 371v4h4v-4h-1v3h-3zM633 384v4h4v-4h-1v3h-3zM657 390v4h4v-4h-1v3h-3zM623 394v4h4v-4h-1v3h-3zM83 411v4h4v-4h-1v3h-3zM175 402v4h4v-4h-1v3h-3zM198 405v4h4v-4h-1v3h-3zM141 445v4h4v-4h-1v3h-3zM77 457v4h4v-4h-1v3h-3zM128 481v4h4v-4h-1v3h-3zM79 490v4h4v-4h-1v3h-3zM262 399v4h4v-4h-1v3h-3zM251 402v4h4v-4h-1v3h-3zM208 407v4h4v-4h-1v3h-3zM228 406v4h4v-4h-1v3h-3zM302 401v4h4v-4h-1v3h-3zM254 412v4h4v-4h-1v3h-3zM237 414v4h4v-4h-1v3h-3zM316 420v4h4v-4h-1v3h-3zM256 424v4h4v-4h-1v3h-3zM326 442v4h4v-4h-1v3h-3zM244 448v4h4v-4h-1v3h-3zM269 450v4h4v-4h-1v3h-3zM246 467v4h4v-4h-1v3h-3zM275 476v4h4v-4h-1v3h-3zM247 488v4h4v-4h-1v3h-3zM380 401v4h4v-4h-1v3h-3zM447 400v4h4v-4h-1v3h-3zM342 414v4h4v-4h-1v3h-3zM431 415v4h4v-4h-1v3h-3zM466 418v4h4v-4h-1v3h-3zM340 428v4h4v-4h-1v3h-3zM424 428v4h4v-4h-1v3h-3zM454 431v4h4v-4h-1v3h-3zM355 433v4h4v-4h-1v3h-3zM417 440v4h4v-4h-1v3h-3zM404 442v4h4v-4h-1v3h-3zM379 456v4h4v-4h-1v3h-3zM454 464v4h4v-4h-1v3h-3zM470 475v4h4v-4h-1v3h-3zM456 479v4h4v-4h-1v3h-3zM361 489v4h4v-4h-1v3h-3zM586 399v4h4v-4h-1v3h-3zM600 403v4h4v-4h-1v3h-3zM506 409v4h4v-4h-1v3h-3zM485 422v4h4v-4h-1v3h-3zM544 425v4h4v-4h-1v3h-3zM577 425v4h4v-4h-1v3h-3zM506 430v4h4v-4h-1v3h-3zM532 434v4h4v-4h-1v3h-3zM554 436v4h4v-4h-1v3h-3zM597 434v4h4v-4h-1v3h-3zM572 440v4h4v-4h-1v3h-3zM599 448v4h4v-4h-1v3h-3zM516 450v4h4v-4h-1v3h-3zM583 453v4h4v-4h-1v3h-3zM493 462v4h4v-4h-1v3h-3zM604 461v4h4v-4h-1v3h-3zM602 474v4h4v-4h-1v3h-3zM497 484v4h4v-4h-1v3h-3zM637 401v4h4v-4h-1v3h-3zM646 413v4h4v-4h-1v3h-3zM626 416v4h4v-4h-1v3h-3zM707 418v4h4v-4h-1v3h-3zM716 420v4h4v-4h-1v3h-3zM635 432v4h4v-4h-1v3h-3zM651 442v4h4v-4h-1v3h-3zM707 450v4h4v-4h-1v3h-3zM624 456v4h4v-4h-1v3h-3zM653 459v4h4v-4h-1v3h-3zM634 468v4h4v-4h-1v3h-3zM697 484v4h4v-4h-1v3h-3zM617 492v4h4v-4h-1v3h-3zM79 525v4h4v-4h-1v3h-3zM122 537v4h4v-4h-1v3h-3zM259 506v4h4v-4h-1v3h-3zM331 507v4h4v-4h-1v3h-3zM305 514v4h4v-4h-1v3h-3zM295 525v4h4v-4h-1v3h-3zM275 533v4h4v-4h-1v3h-3zM327 567v4h4v-4h-1v3h-3zM344 499v4h4v-4h-1v3h-3zM482 502v4h4v-4h-1v3h-3zM476 514v4h4v-4h-1v3h-3zM492 520v4h4v-4h-1v3h-3zM507 524v4h4v-4h-1v3h-3zM572 495v4h4v-4h-1v3h-3zM602 517v4h4v-4h-1v3h-3zM643 506v4h4v-4h-1v3h-3zM685 506v4h4v-4h-1v3h-3zM723 501v4h4v-4h-1v3h-3zM652 521v4h4v-4h-1v3h-3zM686 526v4h4v-4h-1v3h-3zM711 529v4h4v-4h-1v3h-3zM649 536v4h4v-4h-1v3h-3zM657 554v4h4v-4h-1v3h-3zM684 561v4h4v-4h-1v3h-3zM704 562v4h4v-4h-1v3h-3z" fill="#5c0000"/>
</g>
<path d="M559 235h4v4h-4zM677 258h4v4h-4zM185 344h4v4h-4zM216 434h4v4h-4zM474 445h4v4h-4zM404 168h4v4h-4z" fill="#ececff"/>
<path d="M559 235v4h4v-4h-1v3h-3zM677 258v4h4v-4h-1v3h-3zM185 344v4h4v-4h-1v3h-3zM216 434v4h4v-4h-1v3h-3zM474 445v4h4v-4h-1v3h-3zM404 168v4h4v-4h-1v3h-3z" fill="#404078"/>
<rect x="71.5" y="134.5" width="669" height="526" fill="none" stroke="#000" stroke-width="1"/>
</svg>
<div id="split"></div>
<div id="msg"></div>
<div id="side">
<div id="phase"><i></i><b>人事フェイズ</b></div>
<div class="t" style="left:8px;top:37px">資金残高</div>
<div class="t" style="left:80px;top:37px;letter-spacing:-0.2px">1000000000</div>
<div class="btn" style="left:8px;top:52px;width:187px;height:26px;line-height:23px"><span class="sx" style="transform:scaleX(0.738);margin-right:-13.6px">コマンド</span>終了</div>
<div class="t" style="left:8px;top:82px">選択国情報</div>
<div id="info"></div>
<div class="t" style="left:18px;top:99px">国名</div>
<div class="t" style="left:18px;top:114px">鉄砲生産</div>
<div class="t" style="left:18px;top:129px">石高</div>
<div class="t" style="left:18px;top:144px">経済</div>
<div class="t" style="left:18px;top:159px">鉱山</div>
<div class="t" style="left:18px;top:174px">貿易港</div>
<div class="btn foc" style="left:8px;top:195px;width:93px">捕虜処遇</div>
<div class="btn" style="left:101px;top:195px;width:94px">捕虜交換</div>
<div class="btn" style="left:8px;top:219px;width:93px">客将招請</div>
<div class="btn" style="left:101px;top:219px;width:94px">人質処遇</div>
<div class="btn" style="left:8px;top:343px;width:93px">軍船一覧</div>
<div class="btn" style="left:101px;top:343px;width:94px">交易船一覧</div>
<div class="btn" style="left:8px;top:367px;width:93px">武将一覧</div>
<div class="btn" style="left:101px;top:367px;width:94px">大名家一覧</div>
<div class="t" style="left:8px;top:430px">大名家<span class="sx" style="transform:scaleX(0.692);margin-right:-12.0px">リスト</span></div>
<div class="abs" style="left:116px;top:430px;width:12px;height:12px;background:#fff;border:1px solid #3a3a3a;border-right-color:#8a8a8a;border-bottom-color:#8a8a8a"></div>
<div class="t" style="left:134px;top:430px">色分け表示</div>
<div id="list">
<div class="hd" style="left:0;width:75px"></div>
<div class="hd" style="left:75px;width:92px"></div>
<div class="t" style="left:79px;top:2px">(臣従含)</div>
<div id="rows"><div class="sq" style="top:21px"></div><div class="t" style="left:20px;top:21px"><span class="sx" style="transform:scaleX(0.572);margin-right:-22.2px">ケレイト</span></div><div class="t" style="left:81px;top:21px">3万0000石</div><div class="sq" style="top:38px"></div><div class="t" style="left:20px;top:38px">高麗</div><div class="t" style="left:81px;top:38px">2万7000石</div><div class="sq" style="top:55px"></div><div class="t" style="left:20px;top:55px"><span class="sx" style="transform:scaleX(0.572);margin-right:-27.8px">アッバース</span>朝</div><div class="t" style="left:81px;top:55px">2万6500石</div><div class="sq" style="top:72px"></div><div class="t" style="left:20px;top:72px"><span class="sx" style="transform:scaleX(0.572);margin-right:-27.8px">アンコール</span>朝</div><div class="t" style="left:81px;top:72px">2万6000石</div><div class="sq" style="top:89px"></div><div class="t" style="left:20px;top:89px"><span class="sx" style="transform:scaleX(0.572);margin-right:-22.2px">ナイマン</span></div><div class="t" style="left:81px;top:89px">2万6000石</div><div class="sq" style="top:106px"></div><div class="t" style="left:20px;top:106px"><span class="sx" style="transform:scaleX(0.554);margin-right:-40.6px">スコットラント</span><span style="letter-spacing:-3px">...</span></div><div class="t" style="left:81px;top:106px">2万5000石</div><div class="sq" style="top:123px"></div><div class="t" style="left:20px;top:123px"><span class="sx" style="transform:scaleX(0.572);margin-right:-22.2px">タタール</span></div><div class="t" style="left:81px;top:123px">2万4000石</div><div class="sq" style="top:140px"></div><div class="t" style="left:20px;top:140px"><span class="sx" style="transform:scaleX(0.572);margin-right:-16.7px">バガン</span>朝</div><div class="t" style="left:81px;top:140px">2万4000石</div><div class="sq" style="top:157px"></div><div class="t" style="left:20px;top:157px">鎌倉政権</div><div class="t" style="left:81px;top:157px">2万4000石</div><div class="sq" style="top:174px"></div><div class="t" style="left:20px;top:174px">奥州藤原</div><div class="t" style="left:81px;top:174px">2万3000石</div><div class="sq" style="top:191px"></div><div class="t" style="left:20px;top:191px"><span class="sx" style="transform:scaleX(0.572);margin-right:-33.4px">ウラディミー</span></div><div class="t" style="left:81px;top:191px">2万3000石</div></div>
<div id="sb"><div class="th"></div>
<svg class="abs" style="left:0;top:0" width="18" height="200" viewBox="0 0 18 200"><path d="M5.5 12.5 L9 9 L12.5 12.5" fill="none" stroke="#505050" stroke-width="1.6"/><path d="M5.5 189.5 L9 193 L12.5 189.5" fill="none" stroke="#505050" stroke-width="1.6"/></svg>
</div>
</div>
</div>
</body>
</html>
